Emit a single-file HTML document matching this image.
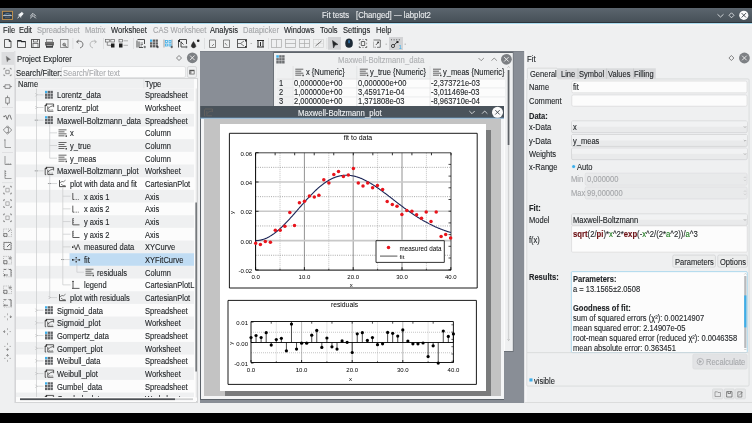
<!DOCTYPE html>
<html><head><meta charset="utf-8">
<style>
*{margin:0;padding:0;box-sizing:border-box}
html,body{width:752px;height:423px;overflow:hidden;background:#000}
body{position:relative;font-family:"Liberation Sans",sans-serif;font-size:7.8px;color:#232629}
#wrap{position:absolute;left:0;top:0;width:752px;height:423px;will-change:transform;overflow:hidden;background:#000}
.a{position:absolute}
.t{position:absolute;white-space:nowrap;line-height:1;-webkit-text-stroke:.12px currentColor;transform:scaleX(.885);transform-origin:0 0}
svg{position:absolute;overflow:visible}

#titlebar{left:0;top:8px;width:752px;height:15px;background:linear-gradient(#5b656e,#465058);border-bottom:1px solid #2e353b}
#cyan{left:0;top:23px;width:752px;height:1px;background:#a9dbef}
#menubar{left:0;top:23px;width:752px;height:13px;background:linear-gradient(#f7f8f8,#eff0f1 30%)}
#toolbar{left:0;top:36px;width:752px;height:15px;background:#eff0f1}
#main{left:0;top:51px;width:752px;height:362px;background:#eff0f1}
#mdi{left:200px;top:51px;width:324px;height:352px;background:#898e96;border-top:1px solid #7d828a}
.menu .t{top:25.90px;font-size:8.50px;color:#232629}
.menu .dis{color:#a3a5a8}




.tr .t{font-size:7.9px;color:#232629}


.ss .t{font-size:7.9px;color:#232629}


.pw .t{font-size:7.9px;color:#232629}


.fp .t{font-size:7.9px;color:#232629}
.fx b{font-weight:bold;color:#6a0c10}
.fx i{font-style:normal;color:#1f7a1f}

</style></head><body><div id="wrap">

<div id="titlebar" class="a"></div>
<div id="menubar" class="a"></div>
<div id="cyan" class="a"></div>
<div id="toolbar" class="a"></div>
<div id="main" class="a"></div>
<div id="mdi" class="a"></div>
<div class="menu">
<span class="t" style="left:3px">File</span>
<span class="t" style="left:19px">Edit</span>
<span class="t dis" style="left:37px">Spreadsheet</span>
<span class="t dis" style="left:85px">Matrix</span>
<span class="t" style="left:111px">Worksheet</span>
<span class="t dis" style="left:153px">CAS Worksheet</span>
<span class="t" style="left:210px">Analysis</span>
<span class="t dis" style="left:243px">Datapicker</span>
<span class="t" style="left:284px">Windows</span>
<span class="t" style="left:320px">Tools</span>
<span class="t" style="left:343px">Settings</span>
<span class="t" style="left:376px">Help</span>
</div>
<span class="t" style="left:322px;top:11.4px;color:#eceef0;font-size:8.75px">Fit tests</span>
<span class="t" style="left:356px;top:11.4px;color:#eceef0;font-size:8.75px">[Changed] — labplot2</span>

<svg style="left:0;top:0" width="752" height="60" viewBox="0 0 752 60"><path d="M4.5 39.5 H9 L11 41.5 V47.5 H4.5 Z" fill="none" stroke="#4d4d4d" stroke-width="0.9"/><path d="M9 39.5 L11 41.5 H9Z" fill="#232629" stroke="#232629" stroke-width="0.5"/><path d="M17.5 40.5 H21 L22 41.5 H25.5 V47.5 H17.5 Z" fill="none" stroke="#4d4d4d" stroke-width="0.9"/><rect x="17.5" y="40" width="4" height="1.6" fill="#232629"/><rect x="21" y="41" width="4.5" height="1.2" fill="#232629"/><rect x="31.5" y="39.5" width="8" height="8" fill="none" stroke="#4d4d4d" stroke-width="0.9"/><rect x="33.5" y="39.5" width="4" height="2.5" fill="none"/><rect x="33.5" y="39.5" width="4" height="2.5" fill="none" stroke="#4d4d4d" stroke-width="0.7"/><rect x="33" y="43.5" width="5" height="4" fill="none" stroke="#4d4d4d" stroke-width="0.7"/><rect x="46.5" y="39.5" width="6" height="2.5" fill="none" stroke="#777" stroke-width="0.7"/><rect x="45" y="42" width="9" height="3.5" fill="#6b6b6b"/><rect x="46.5" y="44.5" width="6" height="2.5" fill="none" stroke="#4d4d4d" stroke-width="0.7"/><rect x="46" y="46.2" width="7" height="1.3" fill="#232629"/><rect x="60.5" y="39.5" width="7.5" height="8" fill="none" stroke="#8a8a8a" stroke-width="0.9"/><path d="M63.5 44 L67 47.5" fill="none" stroke="#4d4d4d" stroke-width="1"/><circle cx="64.2" cy="44.6" r="1.4" fill="none" stroke="#555" stroke-width=".8"/><rect x="72.5" y="38" width="0.8" height="11" fill="#dadbdc"/><path d="M77 41.5 Q82 40 83 44 Q83.5 47 80 48" fill="none" stroke="#6b6b6b" stroke-width="0.9"/><path d="M76.5 41.8 L78.8 40 M76.5 41.8 L78.5 43.3" fill="none" stroke="#6b6b6b" stroke-width="0.9"/><path d="M96 41.5 Q91 40 90 44 Q89.5 47 93 48" fill="none" stroke="#b4b5b6" stroke-width="0.9"/><path d="M96.5 41.8 L94.2 40 M96.5 41.8 L94.5 43.3" fill="none" stroke="#b4b5b6" stroke-width="0.9"/><rect x="103" y="38" width="0.8" height="11" fill="#dadbdc"/><rect x="105.5" y="39.5" width="3.8" height="2.5" fill="none" stroke="#666" stroke-width="0.7"/><rect x="110.8" y="39.5" width="3.8" height="2.5" fill="none" stroke="#666" stroke-width="0.7"/><path d="M107.3 42 V45.3 H111" fill="none" stroke="#666" stroke-width="0.7"/><rect x="111" y="43.5" width="3.5" height="4" fill="#1e1e1e"/><rect x="119" y="39.5" width="3.5" height="2.5" fill="none" stroke="#666" stroke-width="0.7"/><rect x="123.5" y="40.3" width="4.5" height="1" fill="#b0b0b0"/><rect x="119" y="43.5" width="3.5" height="4" fill="#1e1e1e"/><rect x="123.5" y="44.8" width="4.5" height="1" fill="#b0b0b0"/><rect x="133" y="38" width="0.8" height="11" fill="#dadbdc"/><path d="M137 40.5 V47.5 M137.5 39.5 H144.5 V44 M139 41.5 V47.5 H143" fill="none" stroke="#3a3a3a" stroke-width="0.9"/><path d="M140.5 43 H143 M140.5 44.5 H143 M140.5 46 H142" fill="none" stroke="#3a3a3a" stroke-width="0.6"/><path d="M143.5 47 H146 M144.8 45.8 V48.2" fill="none" stroke="#232629" stroke-width="0.6"/><rect x="150.0" y="39.5" width="2.3" height="2.3" fill="#3daee9"/><rect x="150.0" y="42.3" width="2.3" height="2.3" fill="#5e5e5e"/><rect x="150.0" y="45.1" width="2.3" height="2.3" fill="#5e5e5e"/><rect x="152.8" y="39.5" width="2.3" height="2.3" fill="#5e5e5e"/><rect x="152.8" y="42.3" width="2.3" height="2.3" fill="#5e5e5e"/><rect x="152.8" y="45.1" width="2.3" height="2.3" fill="#5e5e5e"/><rect x="155.6" y="39.5" width="2.3" height="2.3" fill="#5e5e5e"/><rect x="155.6" y="42.3" width="2.3" height="2.3" fill="#5e5e5e"/><rect x="155.6" y="45.1" width="2.3" height="2.3" fill="#5e5e5e"/><path d="M156.5 47 H159 M157.7 45.8 V48.2" fill="none" stroke="#232629" stroke-width="0.6"/><path d="M164 39.5 V47.5 M172 39.5 V47.5" fill="none" stroke="#707070" stroke-width="0.6"/><rect x="165.5" y="40.5" width="2" height="2" fill="none" stroke="#3daee9" stroke-width="0.8"/><rect x="165.5" y="44.0" width="2" height="2" fill="none" stroke="#3daee9" stroke-width="0.8"/><rect x="169.0" y="40.5" width="2" height="2" fill="none" stroke="#3daee9" stroke-width="0.8"/><rect x="169.0" y="44.0" width="2" height="2" fill="none" stroke="#3daee9" stroke-width="0.8"/><path d="M170.5 47 H173 M171.7 45.8 V48.2" fill="none" stroke="#232629" stroke-width="0.6"/><path d="M178.5 41 V47.5 M179 39.5 H186.5 V44 M181 42 L183.5 44.5 M181 41.5 V47 H185" fill="none" stroke="#3a3a3a" stroke-width="0.9"/><rect x="178" y="40" width="2" height="2" fill="#232629"/><path d="M185 47 H187.5 M186.2 45.8 V48.2" fill="none" stroke="#232629" stroke-width="0.6"/><path d="M193.5 41.5 Q191 45 191.2 46.3 A2.6 2.6 0 0 0 196 46.3 Q196 45 193.5 41.5Z" fill="#2b2b2b" stroke="#2b2b2b" stroke-width="0.4"/><circle cx="198.2" cy="40.8" r="1.3" fill="#1e1e1e"/><rect x="204" y="38" width="0.8" height="11" fill="#dadbdc"/><path d="M209.5 40 H215.5 V47.5 H209.5 Z" fill="none" stroke="#6a6a6a" stroke-width="0.8"/><path d="M212 46 L214 44" fill="none" stroke="#555" stroke-width="0.7"/><path d="M223.5 40 H229.5 V47.5 H223.5 Z" fill="none" stroke="#6a6a6a" stroke-width="0.8"/><path d="M225 43 L227 45.5" fill="none" stroke="#555" stroke-width="0.7"/><rect x="237.5" y="39.5" width="9" height="8" fill="none" stroke="#4a4a4a" stroke-width="0.9"/><path d="M238 43.5 H240.5 L244 41 M240.5 43.5 L244 46" fill="none" stroke="#4a4a4a" stroke-width="0.7"/><rect x="245" y="40" width="1.5" height="1.5" fill="#333"/><rect x="245" y="46" width="1.5" height="1.5" fill="#333"/><rect x="250.5" y="43.3" width="1.5" height="0.6" fill="#8a8a8a"/><path d="M257 40.5 H264 M257 47 H264 M258 40.5 V47 M263 40.5 V47 M260.5 42 V46" fill="none" stroke="#2a2a2a" stroke-width="1"/><rect x="268" y="38" width="0.8" height="11" fill="#dadbdc"/><rect x="271.5" y="39.5" width="10" height="8" fill="none" stroke="#a9a9a9" stroke-width="0.7"/><path d="M276.5 39.5 V47.5" fill="none" stroke="#a9a9a9" stroke-width="0.7"/><rect x="285.5" y="39.5" width="10" height="8" fill="none" stroke="#a9a9a9" stroke-width="0.7"/><path d="M285.5 43.5 H295.5" fill="none" stroke="#a9a9a9" stroke-width="0.7"/><rect x="299.5" y="39.5" width="10" height="8" fill="none" stroke="#a9a9a9" stroke-width="0.7"/><path d="M304.5 39.5 V47.5 M299.5 43.5 H309.5" fill="none" stroke="#a9a9a9" stroke-width="0.7"/><rect x="313.5" y="39.5" width="10" height="8" fill="none" stroke="#cfcfcf" stroke-width="0.7"/><path d="M318.5 39.5 V47.5 M313.5 43.5 H323.5" fill="none" stroke="#dadada" stroke-width="0.6"/><path d="M315.5 46 L321.5 41" fill="none" stroke="#555" stroke-width="0.8"/><rect x="326.5" y="38" width="0.8" height="11" fill="#dadbdc"/><rect x="328" y="37" width="13" height="12.7" fill="#d2d3d5"/><path d="M332.5 40.5 L338 44.5 L335 45 L333.5 48 Z" fill="#232629" stroke="#232629" stroke-width="0.5"/><path d="M349 38.6 C352.3 38.6 352.8 41.5 352.8 43.5 C352.8 46.5 351.5 47.8 349 47.8 C346.5 47.8 345.3 46.5 345.3 43.5 C345.3 41.5 345.8 38.6 349 38.6Z" fill="#1c2935"/><rect x="348.4" y="40.2" width="1.3" height="3" fill="#2f82c8"/><path d="M359.3 40.8 V39.5 H360.8 M365.2 39.5 H366.7 V40.8 M366.7 46.2 V47.5 H365.2 M360.8 47.5 H359.3 V46.2" fill="none" stroke="#444" stroke-width="0.8"/><path d="M361.3 41.5 H364.7 V45.5 H361.3Z" fill="none" stroke="#444" stroke-width="0.8"/><path d="M362.2 39.6 H363.8 M362.2 47.4 H363.8 M359.4 42.7 V44.3 M366.6 42.7 V44.3" fill="none" stroke="#666" stroke-width="0.6"/><path d="M373.5 40 H380.3 V47.3 H377" fill="none" stroke="#555" stroke-width="0.8"/><path d="M373.5 41.5 V47.3 H376" fill="none" stroke="#666" stroke-width="0.7"/><path d="M373.5 41.5 V47.3 H376" fill="none" stroke="#eff0f1" stroke-width=".9" stroke-dasharray="1 1"/><path d="M375.8 45 L378.4 42.4" fill="none" stroke="#333" stroke-width="0.8"/><rect x="377.3" y="41.6" width="1.6" height="1.6" fill="#333"/><rect x="385.5" y="43.8" width="1.5" height="0.6" fill="#8a8a8a"/><rect x="389" y="37" width="14" height="13" fill="#d2d3d5"/><path d="M391 39.8 H401" stroke="#333" stroke-width=".8" stroke-dasharray="1 1.6"/><circle cx="393" cy="46" r="1.6" fill="none" stroke="#333" stroke-width=".9"/><path d="M394 45 L397.5 41.8" fill="none" stroke="#333" stroke-width="0.9"/><rect x="396.5" y="41" width="2" height="2" fill="#222"/><text x="398.5" y="48.5" font-size="6" fill="#3daee9" font-family="Liberation Sans">1</text><rect x="404.5" y="43.8" width="1.5" height="0.6" fill="#8a8a8a"/></svg>
<svg style="left:0;top:0" width="752" height="24" viewBox="0 0 752 24">
<rect x="2.4" y="11.3" width="10.1" height="8.1" fill="#2e3d4c" stroke="#c9954c" stroke-width=".9"/>
<path d="M3.5 15.5 Q7.5 11.8 11.5 15.5" stroke="#7fa8c8" stroke-width=".7" fill="none"/>
<path d="M3.2 15.6 H11.7" stroke="#dfe9f0" stroke-width=".8"/>
<path d="M5 17.5 H10" stroke="#6b7f90" stroke-width=".5"/>
<path d="M17.6 18 L19.4 16.3" stroke="#f4f6f8" stroke-width="1"/>
<path d="M19 14.6 L21.8 12.4 L23.2 13.6 L20.8 16.6 Z" fill="#f4f6f8" stroke="#f4f6f8" stroke-width=".9"/>
<path d="M18.3 14.9 L21.2 17.6" stroke="#f4f6f8" stroke-width=".9"/>
<path d="M30.2 16.2 L33 13.4 L35.8 16.2 M30.2 18.3 L33 15.5 L35.8 18.3" stroke="#f0f2f4" stroke-width=".85" fill="none"/>
<path d="M717.5 14.3 L720.5 17 L723.5 14.3" stroke="#eef0f2" stroke-width=".8" fill="none"/>
<path d="M731.5 12.8 L734 15.3 L731.5 17.8 L729 15.3Z" stroke="#eef0f2" stroke-width=".8" fill="none"/>
<circle cx="743.8" cy="15.3" r="4.6" fill="#fbfbfb"/>
<path d="M741.6 13.1 L746 17.5 M746 13.1 L741.6 17.5" stroke="#3a4148" stroke-width=".9"/>
</svg>
<div class="a" style="left:15px;top:78px;width:183px;height:324px;background:#fcfcfc;border:1px solid #d4d5d6"></div><div class="a" style="left:61px;top:66px;width:125px;height:12px;background:#fcfcfc;border:1px solid #e2e3e4;border-radius:2px"></div><div class="a" style="left:186.5px;top:66px;width:10.5px;height:12px;background:#eff0f1;border:1px solid #d8d9da;border-radius:2px"></div><svg style="left:0;top:0" width="200" height="410" viewBox="0 0 200 410"><rect x="14.4" y="51" width="0.9" height="352" fill="#d6d7d9"/><rect x="1.5" y="52" width="12.5" height="12.9" fill="#dcdddf"/><path d="M6.2 56.2 L10.6 59.4 L8.4 59.9 L7.1 62.1 Z" fill="#6a6a6a" stroke="#6a6a6a" stroke-width="0.3" /><path d="M5.2 68.4 H3.9 V69.7 M5.2 75.6 H3.9 V74.3 M9.799999999999999 68.4 H11.1 V69.7 M9.799999999999999 75.6 H11.1 V74.3 " fill="none" stroke="#707070" stroke-width="0.7" /><path d="M5.8 70.3 H9.2 V73.7 H5.8Z" fill="none" stroke="#777" stroke-width="0.7" /><path d="M5 84.8 H10 V88.4 H5Z M3 86.6 H5 M10 86.6 H12" fill="none" stroke="#666" stroke-width="0.7" /><path d="M5.7 97.6 H9.3 V103.2 H5.7Z M7.5 95.6 V97.6 M7.5 103.2 V105.2" fill="none" stroke="#666" stroke-width="0.7" /><rect x="2" y="107" width="11" height="0.8" fill="#dcdddf"/><rect x="3.5" y="115.8" width="1.3" height="1.3" fill="#555"/><path d="M5.5 115 L7.2 119.5 L9 114.8 M9.8 114.8 L11.5 119.5" fill="none" stroke="#555" stroke-width="0.8" /><path d="M7.5 125.8 L11.7 130 L7.5 134.2 L3.3 130Z M6.6 127.5 L8.4 127.5 L8.4 132.5 L6.6 132.5" fill="none" stroke="#666" stroke-width="0.7" /><path d="M5 139.5 V147.5 H11 M4 140 H5.5" fill="none" stroke="#777" stroke-width="0.7" /><rect x="2" y="152" width="11" height="0.8" fill="#dcdddf"/><path d="M5 156 V164.5 H11.5" fill="none" stroke="#777" stroke-width="0.7" /><path d="M7 163.3 V164.5 M8.8 163.3 V164.5 M10.6 163.3 V164.5" fill="none" stroke="#666" stroke-width="0.6" /><path d="M5 170 V178.5 H11.5" fill="none" stroke="#777" stroke-width="0.7" /><path d="M5 171.5 H6.2 M5 173.5 H6.2 M5 175.5 H6.2" fill="none" stroke="#666" stroke-width="0.6" /><rect x="2" y="182.3" width="11" height="0.8" fill="#dcdddf"/><path d="M5.0 186.29999999999998 H3.7 V187.6 M5.0 193.9 H3.7 V192.6 M10.0 186.29999999999998 H11.3 V187.6 M10.0 193.9 H11.3 V192.6 " fill="none" stroke="#666" stroke-width="0.7" /><path d="M5.8 188.29999999999998 H9.2 V191.9 H5.8Z" fill="none" stroke="#888" stroke-width="0.6" /><path d="M5.0 199.79999999999998 H3.7 V201.1 M5.0 207.4 H3.7 V206.1 M10.0 199.79999999999998 H11.3 V201.1 M10.0 207.4 H11.3 V206.1 " fill="none" stroke="#666" stroke-width="0.7" /><path d="M5.8 201.79999999999998 H9.2 V205.4 H5.8Z" fill="none" stroke="#888" stroke-width="0.6" /><path d="M5.0 214.0 H3.7 V215.3 M5.0 221.60000000000002 H3.7 V220.3 M10.0 214.0 H11.3 V215.3 M10.0 221.60000000000002 H11.3 V220.3 " fill="none" stroke="#666" stroke-width="0.7" /><path d="M5.8 216.0 H9.2 V219.60000000000002 H5.8Z" fill="none" stroke="#888" stroke-width="0.6" /><rect x="3.5" y="229.0" width="8" height="7.6" fill="none" stroke="#8a8a8a" stroke-width=".6" stroke-dasharray="1 1.2"/><rect x="3.5" y="233.3" width="3.5" height="3.3" fill="none"/><path d="M3.8 233.60000000000002 H7 V236.4 H3.8Z" fill="none" stroke="#555" stroke-width="0.7" /><path d="M8 231.8 L10.5 229.8" fill="none" stroke="#555" stroke-width="0.6" /><rect x="3.5" y="242.2" width="8" height="7.6" fill="none" stroke="#8a8a8a" stroke-width=".6" stroke-dasharray="1 1.2"/><path d="M4 242.5 H11 V249.5 H4Z" fill="none" stroke="#666" stroke-width="0.7" /><path d="M7 247 L10 244" fill="none" stroke="#444" stroke-width="0.8" /><rect x="3.5" y="256.4" width="8" height="7.6" fill="none" stroke="#8a8a8a" stroke-width=".6" stroke-dasharray="1 1.2"/><path d="M3.8 260.7 H7 V263.7 H3.8Z" fill="none" stroke="#555" stroke-width="0.7" /><path d="M10 256.7 V259.7 M8.5 258.2 H11.5" fill="none" stroke="#555" stroke-width="0.6" /><rect x="3.5" y="269.2" width="8" height="7.6" fill="none" stroke="#8a8a8a" stroke-width=".6" stroke-dasharray="1 1.2"/><path d="M4 269.5 H6 M9 269.5 H11 V276.5 M4 275 H8 M5 274 L4 275 L5 276" fill="none" stroke="#555" stroke-width="0.7" /><rect x="3.5" y="286.0" width="8" height="7.6" fill="none" stroke="#8a8a8a" stroke-width=".6" stroke-dasharray="1 1.2"/><path d="M3.8 290.3 H7 V293.3 H3.8Z" fill="none" stroke="#555" stroke-width="0.7" /><path d="M10 286.3 V289.3 M8.5 287.8 H11.5" fill="none" stroke="#555" stroke-width="0.6" /><rect x="3.5" y="299.5" width="8" height="7.6" fill="none" stroke="#8a8a8a" stroke-width=".6" stroke-dasharray="1 1.2"/><path d="M4 299.8 H6 M9 299.8 H11 V306.8 M4 305.3 H8 M5 304.3 L4 305.3 L5 306.3" fill="none" stroke="#555" stroke-width="0.7" /><path d="M7.5 313.3 V315.3 M7.5 318.3 V320.3 M4 316.8 H5.5 M9.5 316.8 H11" fill="none" stroke="#8a8a8a" stroke-width="0.6" /><path d="M10 315.8 L11.5 316.8 L10 317.8" fill="none" stroke="#555" stroke-width="0.7" /><path d="M7.5 328.1 V330.1 M7.5 333.1 V335.1 M4 331.6 H5.5 M9.5 331.6 H11" fill="none" stroke="#8a8a8a" stroke-width="0.6" /><path d="M5 330.6 L3.5 331.6 L5 332.6" fill="none" stroke="#555" stroke-width="0.7" /><path d="M7.5 342.9 V344.9 M7.5 347.9 V349.9 M4 346.4 H5.5 M9.5 346.4 H11" fill="none" stroke="#8a8a8a" stroke-width="0.6" /><path d="M6.5 348.9 L7.5 350.4 L8.5 348.9" fill="none" stroke="#555" stroke-width="0.7" /><path d="M7.5 354.9 V356.9 M7.5 359.9 V361.9 M4 358.4 H5.5 M9.5 358.4 H11" fill="none" stroke="#8a8a8a" stroke-width="0.6" /><path d="M6.5 355.9 L7.5 354.4 L8.5 355.9" fill="none" stroke="#555" stroke-width="0.7" /><path d="M179 55.5 L181.5 58 L179 60.5 L176.5 58Z" fill="none" stroke="#555" stroke-width="0.7" /><circle cx="192.3" cy="57.8" r="5.4" fill="#7d8084"/><path d="M190 55.5 L194.6 60.1 M194.6 55.5 L190 60.1" fill="none" stroke="#f2f2f2" stroke-width="0.9" /><rect x="189.3" y="69.8" width="5.2" height="4.6" fill="#555"/><rect x="190.2" y="71.2" width="3.6" height="2.5" fill="#f4f4f4"/><rect x="190.2" y="71.2" width="1.2" height="2.5" fill="#777"/><rect x="16" y="79" width="178" height="9.5" fill="#eff0f1"/><rect x="143.5" y="79" width="0.8" height="9.5" fill="#dcdddf"/><rect x="16" y="88.5" width="178" height="12.67" fill="#eff0f1"/><path d="M36.5 94.835 H43.5" fill="none" stroke="#c9cacb" stroke-width="0.7" /><path d="M35.5 93.335 L37.0 94.835 L35.5 96.335" fill="none" stroke="#9a9b9c" stroke-width="0.6" /><rect x="45.0" y="90.835" width="2.35" height="2.35" fill="#3daee9"/><rect x="45.0" y="93.585" width="2.35" height="2.35" fill="#616366"/><rect x="45.0" y="96.335" width="2.35" height="2.35" fill="#616366"/><rect x="47.75" y="90.835" width="2.35" height="2.35" fill="#616366"/><rect x="47.75" y="93.585" width="2.35" height="2.35" fill="#616366"/><rect x="47.75" y="96.335" width="2.35" height="2.35" fill="#616366"/><rect x="50.5" y="90.835" width="2.35" height="2.35" fill="#616366"/><rect x="50.5" y="93.585" width="2.35" height="2.35" fill="#616366"/><rect x="50.5" y="96.335" width="2.35" height="2.35" fill="#616366"/><path d="M36.5 107.505 H43.5" fill="none" stroke="#c9cacb" stroke-width="0.7" /><path d="M35.5 106.005 L37.0 107.505 L35.5 109.005" fill="none" stroke="#9a9b9c" stroke-width="0.6" /><path d="M45.2 105.30499999999999 V111.30499999999999 H46.2 M45.8 104.005 H53.6 V107.10499999999999" fill="none" stroke="#333" stroke-width="0.8" /><path d="M44.8 105.705 L46.8 103.60499999999999 V105.705 Z" fill="#222" stroke="#222" stroke-width="0.3" /><path d="M47.8 106.30499999999999 V111.205 H53.4" fill="none" stroke="#333" stroke-width="0.8" /><path d="M48 108.505 L50.3 106.705 L53.2 105.705" fill="none" stroke="#333" stroke-width="0.7" /><path d="M49.3 109.80499999999999 H50.3 M51.6 109.80499999999999 H52.6" fill="none" stroke="#555" stroke-width="0.8" /><rect x="16" y="113.84" width="178" height="12.67" fill="#eff0f1"/><path d="M36.5 120.175 H43.5" fill="none" stroke="#c9cacb" stroke-width="0.7" /><path d="M34.7 120.175 H37.7" fill="none" stroke="#7a7b7c" stroke-width="0.7" /><rect x="45.0" y="116.175" width="2.35" height="2.35" fill="#3daee9"/><rect x="45.0" y="118.925" width="2.35" height="2.35" fill="#616366"/><rect x="45.0" y="121.675" width="2.35" height="2.35" fill="#616366"/><rect x="47.75" y="116.175" width="2.35" height="2.35" fill="#616366"/><rect x="47.75" y="118.925" width="2.35" height="2.35" fill="#616366"/><rect x="47.75" y="121.675" width="2.35" height="2.35" fill="#616366"/><rect x="50.5" y="116.175" width="2.35" height="2.35" fill="#616366"/><rect x="50.5" y="118.925" width="2.35" height="2.35" fill="#616366"/><rect x="50.5" y="121.675" width="2.35" height="2.35" fill="#616366"/><path d="M49.7 132.845 H57.0" fill="none" stroke="#c9cacb" stroke-width="0.7" /><path d="M58.5 129.845 H66.5 M58.5 131.845 H64.5 M58.5 133.845 H66.5 M58.5 135.845 H64.5" fill="none" stroke="#555" stroke-width="0.9" /><rect x="65.5" y="135.345" width="1.5" height="1.5" fill="#444"/><rect x="16" y="139.18" width="178" height="12.67" fill="#eff0f1"/><path d="M49.7 145.51500000000001 H57.0" fill="none" stroke="#c9cacb" stroke-width="0.7" /><path d="M58.5 142.51500000000001 H66.5 M58.5 144.51500000000001 H64.5 M58.5 146.51500000000001 H66.5 M58.5 148.51500000000001 H64.5" fill="none" stroke="#555" stroke-width="0.9" /><rect x="65.5" y="148.01500000000001" width="1.5" height="1.5" fill="#444"/><path d="M49.7 158.185 H57.0" fill="none" stroke="#c9cacb" stroke-width="0.7" /><path d="M58.5 155.185 H66.5 M58.5 157.185 H64.5 M58.5 159.185 H66.5 M58.5 161.185 H64.5" fill="none" stroke="#555" stroke-width="0.9" /><rect x="65.5" y="160.685" width="1.5" height="1.5" fill="#444"/><rect x="16" y="164.51999999999998" width="178" height="12.67" fill="#eff0f1"/><path d="M36.5 170.855 H43.5" fill="none" stroke="#c9cacb" stroke-width="0.7" /><path d="M34.7 170.855 H37.7" fill="none" stroke="#7a7b7c" stroke-width="0.7" /><path d="M45.2 168.655 V174.655 H46.2 M45.8 167.355 H53.6 V170.45499999999998" fill="none" stroke="#333" stroke-width="0.8" /><path d="M44.8 169.05499999999998 L46.8 166.95499999999998 V169.05499999999998 Z" fill="#222" stroke="#222" stroke-width="0.3" /><path d="M47.8 169.655 V174.55499999999998 H53.4" fill="none" stroke="#333" stroke-width="0.8" /><path d="M48 171.855 L50.3 170.05499999999998 L53.2 169.05499999999998" fill="none" stroke="#333" stroke-width="0.7" /><path d="M49.3 173.155 H50.3 M51.6 173.155 H52.6" fill="none" stroke="#555" stroke-width="0.8" /><path d="M49.7 183.525 H57.0" fill="none" stroke="#c9cacb" stroke-width="0.7" /><path d="M47.900000000000006 183.525 H50.900000000000006" fill="none" stroke="#7a7b7c" stroke-width="0.7" /><path d="M59.5 180.125 V186.625 H65.9" fill="none" stroke="#333" stroke-width="0.9" /><path d="M60.0 182.725 L62.0 181.425 L63.5 181.725 L65.5 180.225" fill="none" stroke="#555" stroke-width="0.7" /><path d="M61.0 184.125 L63.0 185.525 H65.5" fill="none" stroke="#555" stroke-width="0.7" /><rect x="16" y="189.86" width="178" height="12.67" fill="#eff0f1"/><path d="M62.8 196.19500000000002 H70.5" fill="none" stroke="#c9cacb" stroke-width="0.7" /><path d="M72.8 192.99500000000003 V199.49500000000003 H74" fill="none" stroke="#333" stroke-width="0.8" /><path d="M74.5 199.49500000000003 H79.6" fill="none" stroke="#555" stroke-width="0.8" stroke-dasharray=".9 .8"/><path d="M62.8 208.865 H70.5" fill="none" stroke="#c9cacb" stroke-width="0.7" /><path d="M72.8 205.66500000000002 V212.16500000000002 H74" fill="none" stroke="#333" stroke-width="0.8" /><path d="M74.5 212.16500000000002 H79.6" fill="none" stroke="#555" stroke-width="0.8" stroke-dasharray=".9 .8"/><rect x="16" y="215.2" width="178" height="12.67" fill="#eff0f1"/><path d="M62.8 221.535 H70.5" fill="none" stroke="#c9cacb" stroke-width="0.7" /><path d="M72.8 218.335 V224.835 H79.5" fill="none" stroke="#333" stroke-width="0.8" /><path d="M72.8 218.535 H74 M72.8 220.535 H74 M72.8 222.535 H74" fill="none" stroke="#444" stroke-width="0.6" /><path d="M62.8 234.205 H70.5" fill="none" stroke="#c9cacb" stroke-width="0.7" /><path d="M72.8 231.00500000000002 V237.50500000000002 H79.5" fill="none" stroke="#333" stroke-width="0.8" /><path d="M72.8 231.205 H74 M72.8 233.205 H74 M72.8 235.205 H74" fill="none" stroke="#444" stroke-width="0.6" /><rect x="16" y="240.54" width="178" height="12.67" fill="#eff0f1"/><path d="M62.8 246.875 H70.5" fill="none" stroke="#c9cacb" stroke-width="0.7" /><rect x="72" y="246.375" width="1.5" height="1.5" fill="#222"/><path d="M74 244.875 L76 249.875 L78 244.375 L80 249.875" fill="none" stroke="#3a3a3a" stroke-width="0.8" /><rect x="69.5" y="253.21" width="124.5" height="12.67" fill="#c0dcf3"/><path d="M62.8 259.545 H70.5" fill="none" stroke="#c9cacb" stroke-width="0.7" /><path d="M61.0 259.545 H64.0" fill="none" stroke="#7a7b7c" stroke-width="0.7" /><rect x="72" y="259.045" width="1.6" height="1.6" fill="#222"/><rect x="75.5" y="257.045" width="1.4" height="1.4" fill="#333"/><rect x="75.5" y="261.045" width="1.4" height="1.4" fill="#333"/><rect x="78.5" y="259.045" width="1.6" height="1.6" fill="#333"/><path d="M73.5 259.845 H80" fill="none" stroke="#555" stroke-width="0.6" /><rect x="16" y="265.88" width="178" height="12.67" fill="#eff0f1"/><path d="M76.9 272.215 H84.0" fill="none" stroke="#c9cacb" stroke-width="0.7" /><path d="M85.5 269.215 H93.5 M85.5 271.215 H91.5 M85.5 273.215 H93.5 M85.5 275.215 H91.5" fill="none" stroke="#555" stroke-width="0.9" /><rect x="92.5" y="274.715" width="1.5" height="1.5" fill="#444"/><path d="M62.8 284.885 H70.5" fill="none" stroke="#c9cacb" stroke-width="0.7" /><path d="M73 281.385 V288.385 H79.5 M72 281.385 H74 M72 288.385 H73" fill="none" stroke="#333" stroke-width="0.8" /><rect x="16" y="291.22" width="178" height="12.67" fill="#eff0f1"/><path d="M49.7 297.555 H57.0" fill="none" stroke="#c9cacb" stroke-width="0.7" /><path d="M48.7 296.055 L50.2 297.555 L48.7 299.055" fill="none" stroke="#9a9b9c" stroke-width="0.6" /><path d="M59.5 294.15500000000003 V300.65500000000003 H65.9" fill="none" stroke="#333" stroke-width="0.9" /><path d="M60.0 296.755 L62.0 295.455 L63.5 295.755 L65.5 294.255" fill="none" stroke="#555" stroke-width="0.7" /><path d="M61.0 298.15500000000003 L63.0 299.555 H65.5" fill="none" stroke="#555" stroke-width="0.7" /><path d="M36.5 310.22499999999997 H43.5" fill="none" stroke="#c9cacb" stroke-width="0.7" /><path d="M35.5 308.72499999999997 L37.0 310.22499999999997 L35.5 311.72499999999997" fill="none" stroke="#9a9b9c" stroke-width="0.6" /><rect x="45.0" y="306.22499999999997" width="2.35" height="2.35" fill="#3daee9"/><rect x="45.0" y="308.97499999999997" width="2.35" height="2.35" fill="#616366"/><rect x="45.0" y="311.72499999999997" width="2.35" height="2.35" fill="#616366"/><rect x="47.75" y="306.22499999999997" width="2.35" height="2.35" fill="#616366"/><rect x="47.75" y="308.97499999999997" width="2.35" height="2.35" fill="#616366"/><rect x="47.75" y="311.72499999999997" width="2.35" height="2.35" fill="#616366"/><rect x="50.5" y="306.22499999999997" width="2.35" height="2.35" fill="#616366"/><rect x="50.5" y="308.97499999999997" width="2.35" height="2.35" fill="#616366"/><rect x="50.5" y="311.72499999999997" width="2.35" height="2.35" fill="#616366"/><rect x="16" y="316.56" width="178" height="12.67" fill="#eff0f1"/><path d="M36.5 322.895 H43.5" fill="none" stroke="#c9cacb" stroke-width="0.7" /><path d="M35.5 321.395 L37.0 322.895 L35.5 324.395" fill="none" stroke="#9a9b9c" stroke-width="0.6" /><path d="M45.2 320.695 V326.695 H46.2 M45.8 319.395 H53.6 V322.495" fill="none" stroke="#333" stroke-width="0.8" /><path d="M44.8 321.09499999999997 L46.8 318.995 V321.09499999999997 Z" fill="#222" stroke="#222" stroke-width="0.3" /><path d="M47.8 321.695 V326.59499999999997 H53.4" fill="none" stroke="#333" stroke-width="0.8" /><path d="M48 323.895 L50.3 322.09499999999997 L53.2 321.09499999999997" fill="none" stroke="#333" stroke-width="0.7" /><path d="M49.3 325.195 H50.3 M51.6 325.195 H52.6" fill="none" stroke="#555" stroke-width="0.8" /><path d="M36.5 335.565 H43.5" fill="none" stroke="#c9cacb" stroke-width="0.7" /><path d="M35.5 334.065 L37.0 335.565 L35.5 337.065" fill="none" stroke="#9a9b9c" stroke-width="0.6" /><rect x="45.0" y="331.565" width="2.35" height="2.35" fill="#3daee9"/><rect x="45.0" y="334.315" width="2.35" height="2.35" fill="#616366"/><rect x="45.0" y="337.065" width="2.35" height="2.35" fill="#616366"/><rect x="47.75" y="331.565" width="2.35" height="2.35" fill="#616366"/><rect x="47.75" y="334.315" width="2.35" height="2.35" fill="#616366"/><rect x="47.75" y="337.065" width="2.35" height="2.35" fill="#616366"/><rect x="50.5" y="331.565" width="2.35" height="2.35" fill="#616366"/><rect x="50.5" y="334.315" width="2.35" height="2.35" fill="#616366"/><rect x="50.5" y="337.065" width="2.35" height="2.35" fill="#616366"/><rect x="16" y="341.9" width="178" height="12.67" fill="#eff0f1"/><path d="M36.5 348.23499999999996 H43.5" fill="none" stroke="#c9cacb" stroke-width="0.7" /><path d="M35.5 346.73499999999996 L37.0 348.23499999999996 L35.5 349.73499999999996" fill="none" stroke="#9a9b9c" stroke-width="0.6" /><path d="M45.2 346.03499999999997 V352.03499999999997 H46.2 M45.8 344.73499999999996 H53.6 V347.835" fill="none" stroke="#333" stroke-width="0.8" /><path d="M44.8 346.43499999999995 L46.8 344.335 V346.43499999999995 Z" fill="#222" stroke="#222" stroke-width="0.3" /><path d="M47.8 347.03499999999997 V351.93499999999995 H53.4" fill="none" stroke="#333" stroke-width="0.8" /><path d="M48 349.23499999999996 L50.3 347.43499999999995 L53.2 346.43499999999995" fill="none" stroke="#333" stroke-width="0.7" /><path d="M49.3 350.53499999999997 H50.3 M51.6 350.53499999999997 H52.6" fill="none" stroke="#555" stroke-width="0.8" /><path d="M36.5 360.905 H43.5" fill="none" stroke="#c9cacb" stroke-width="0.7" /><path d="M35.5 359.405 L37.0 360.905 L35.5 362.405" fill="none" stroke="#9a9b9c" stroke-width="0.6" /><rect x="45.0" y="356.905" width="2.35" height="2.35" fill="#3daee9"/><rect x="45.0" y="359.655" width="2.35" height="2.35" fill="#616366"/><rect x="45.0" y="362.405" width="2.35" height="2.35" fill="#616366"/><rect x="47.75" y="356.905" width="2.35" height="2.35" fill="#616366"/><rect x="47.75" y="359.655" width="2.35" height="2.35" fill="#616366"/><rect x="47.75" y="362.405" width="2.35" height="2.35" fill="#616366"/><rect x="50.5" y="356.905" width="2.35" height="2.35" fill="#616366"/><rect x="50.5" y="359.655" width="2.35" height="2.35" fill="#616366"/><rect x="50.5" y="362.405" width="2.35" height="2.35" fill="#616366"/><rect x="16" y="367.24" width="178" height="12.67" fill="#eff0f1"/><path d="M36.5 373.575 H43.5" fill="none" stroke="#c9cacb" stroke-width="0.7" /><path d="M35.5 372.075 L37.0 373.575 L35.5 375.075" fill="none" stroke="#9a9b9c" stroke-width="0.6" /><path d="M45.2 371.375 V377.375 H46.2 M45.8 370.075 H53.6 V373.175" fill="none" stroke="#333" stroke-width="0.8" /><path d="M44.8 371.775 L46.8 369.675 V371.775 Z" fill="#222" stroke="#222" stroke-width="0.3" /><path d="M47.8 372.375 V377.275 H53.4" fill="none" stroke="#333" stroke-width="0.8" /><path d="M48 374.575 L50.3 372.775 L53.2 371.775" fill="none" stroke="#333" stroke-width="0.7" /><path d="M49.3 375.875 H50.3 M51.6 375.875 H52.6" fill="none" stroke="#555" stroke-width="0.8" /><path d="M36.5 386.245 H43.5" fill="none" stroke="#c9cacb" stroke-width="0.7" /><path d="M35.5 384.745 L37.0 386.245 L35.5 387.745" fill="none" stroke="#9a9b9c" stroke-width="0.6" /><rect x="45.0" y="382.245" width="2.35" height="2.35" fill="#3daee9"/><rect x="45.0" y="384.995" width="2.35" height="2.35" fill="#616366"/><rect x="45.0" y="387.745" width="2.35" height="2.35" fill="#616366"/><rect x="47.75" y="382.245" width="2.35" height="2.35" fill="#616366"/><rect x="47.75" y="384.995" width="2.35" height="2.35" fill="#616366"/><rect x="47.75" y="387.745" width="2.35" height="2.35" fill="#616366"/><rect x="50.5" y="382.245" width="2.35" height="2.35" fill="#616366"/><rect x="50.5" y="384.995" width="2.35" height="2.35" fill="#616366"/><rect x="50.5" y="387.745" width="2.35" height="2.35" fill="#616366"/><rect x="16" y="392.58" width="178" height="5.420000000000016" fill="#eff0f1"/><path d="M36.5 398.91499999999996 H43.5" fill="none" stroke="#c9cacb" stroke-width="0.7" /><path d="M35.5 397.41499999999996 L37.0 398.91499999999996 L35.5 400.41499999999996" fill="none" stroke="#9a9b9c" stroke-width="0.6" /><path d="M45.2 396.715 V402.715 H46.2 M45.8 395.41499999999996 H53.6 V398.515" fill="none" stroke="#333" stroke-width="0.8" /><path d="M44.8 397.11499999999995 L46.8 395.015 V397.11499999999995 Z" fill="#222" stroke="#222" stroke-width="0.3" /><path d="M47.8 397.715 V402.61499999999995 H53.4" fill="none" stroke="#333" stroke-width="0.8" /><path d="M48 399.91499999999996 L50.3 398.11499999999995 L53.2 397.11499999999995" fill="none" stroke="#333" stroke-width="0.7" /><path d="M49.3 401.215 H50.3 M51.6 401.215 H52.6" fill="none" stroke="#555" stroke-width="0.8" /><path d="M36.5 88.5 V398" fill="none" stroke="#c9cacb" stroke-width="0.7" /><path d="M49.7 124.175 V158.185 M49.7 174.855 V297.555" fill="none" stroke="#c9cacb" stroke-width="0.7" /><path d="M62.8 187.525 V284.885" fill="none" stroke="#c9cacb" stroke-width="0.7" /><path d="M76.9 263.545 V272.215" fill="none" stroke="#c9cacb" stroke-width="0.7" /></svg><div class="tr"><span class="t" style="left:16.5px;top:54.85px;font-size:8.72px;color:#232629;font-weight:normal">Project Explorer</span><span class="t" style="left:16px;top:68.85px;font-size:8.72px;color:#232629;font-weight:normal">Search/Filter:</span><span class="t" style="left:63px;top:68.75px;font-size:8.50px;color:#a8aaad;font-weight:normal">Search/Filter text</span><span class="t" style="left:18px;top:80.05px;font-size:8.50px;color:#232629;font-weight:normal">Name</span><span class="t" style="left:145px;top:80.05px;font-size:8.50px;color:#232629;font-weight:normal">Type</span><span class="t" style="left:56.5px;top:91.18px;font-size:8.50px;color:#232629;font-weight:normal">Lorentz_data</span><span class="t" style="left:145px;top:91.18px;font-size:8.50px;color:#232629;font-weight:normal">Spreadsheet</span><span class="t" style="left:56.5px;top:103.85px;font-size:8.50px;color:#232629;font-weight:normal">Lorentz_plot</span><span class="t" style="left:145px;top:103.85px;font-size:8.50px;color:#232629;font-weight:normal">Worksheet</span><span class="t" style="left:56.5px;top:116.52px;font-size:8.50px;color:#232629;font-weight:normal">Maxwell-Boltzmann_data</span><span class="t" style="left:145px;top:116.52px;font-size:8.50px;color:#232629;font-weight:normal">Spreadsheet</span><span class="t" style="left:70.0px;top:129.20px;font-size:8.50px;color:#232629;font-weight:normal">x</span><span class="t" style="left:145px;top:129.20px;font-size:8.50px;color:#232629;font-weight:normal">Column</span><span class="t" style="left:70.0px;top:141.87px;font-size:8.50px;color:#232629;font-weight:normal">y_true</span><span class="t" style="left:145px;top:141.87px;font-size:8.50px;color:#232629;font-weight:normal">Column</span><span class="t" style="left:70.0px;top:154.54px;font-size:8.50px;color:#232629;font-weight:normal">y_meas</span><span class="t" style="left:145px;top:154.54px;font-size:8.50px;color:#232629;font-weight:normal">Column</span><span class="t" style="left:56.5px;top:167.21px;font-size:8.50px;color:#232629;font-weight:normal">Maxwell-Boltzmann_plot</span><span class="t" style="left:145px;top:167.21px;font-size:8.50px;color:#232629;font-weight:normal">Worksheet</span><span class="t" style="left:70.0px;top:179.88px;font-size:8.50px;color:#232629;font-weight:normal">plot with data and fit</span><span class="t" style="left:145px;top:179.88px;font-size:8.50px;color:#232629;font-weight:normal">CartesianPlot</span><span class="t" style="left:83.5px;top:192.55px;font-size:8.50px;color:#232629;font-weight:normal">x axis 1</span><span class="t" style="left:145px;top:192.55px;font-size:8.50px;color:#232629;font-weight:normal">Axis</span><span class="t" style="left:83.5px;top:205.22px;font-size:8.50px;color:#232629;font-weight:normal">x axis 2</span><span class="t" style="left:145px;top:205.22px;font-size:8.50px;color:#232629;font-weight:normal">Axis</span><span class="t" style="left:83.5px;top:217.89px;font-size:8.50px;color:#232629;font-weight:normal">y axis 1</span><span class="t" style="left:145px;top:217.89px;font-size:8.50px;color:#232629;font-weight:normal">Axis</span><span class="t" style="left:83.5px;top:230.56px;font-size:8.50px;color:#232629;font-weight:normal">y axis 2</span><span class="t" style="left:145px;top:230.56px;font-size:8.50px;color:#232629;font-weight:normal">Axis</span><span class="t" style="left:83.5px;top:243.23px;font-size:8.50px;color:#232629;font-weight:normal">measured data</span><span class="t" style="left:145px;top:243.23px;font-size:8.50px;color:#232629;font-weight:normal">XYCurve</span><span class="t" style="left:83.5px;top:255.90px;font-size:8.50px;color:#232629;font-weight:normal">fit</span><span class="t" style="left:145px;top:255.90px;font-size:8.50px;color:#232629;font-weight:normal">XYFitCurve</span><span class="t" style="left:97.0px;top:268.56px;font-size:8.50px;color:#232629;font-weight:normal">residuals</span><span class="t" style="left:145px;top:268.56px;font-size:8.50px;color:#232629;font-weight:normal">Column</span><span class="t" style="left:83.5px;top:281.24px;font-size:8.50px;color:#232629;font-weight:normal">legend</span><span class="t" style="left:145px;top:281.24px;font-size:8.50px;color:#232629;font-weight:normal">CartesianPlotL</span><span class="t" style="left:70.0px;top:293.91px;font-size:8.50px;color:#232629;font-weight:normal">plot with residuals</span><span class="t" style="left:145px;top:293.91px;font-size:8.50px;color:#232629;font-weight:normal">CartesianPlot</span><span class="t" style="left:56.5px;top:306.57px;font-size:8.50px;color:#232629;font-weight:normal">Sigmoid_data</span><span class="t" style="left:145px;top:306.57px;font-size:8.50px;color:#232629;font-weight:normal">Spreadsheet</span><span class="t" style="left:56.5px;top:319.24px;font-size:8.50px;color:#232629;font-weight:normal">Sigmoid_plot</span><span class="t" style="left:145px;top:319.24px;font-size:8.50px;color:#232629;font-weight:normal">Worksheet</span><span class="t" style="left:56.5px;top:331.92px;font-size:8.50px;color:#232629;font-weight:normal">Gompertz_data</span><span class="t" style="left:145px;top:331.92px;font-size:8.50px;color:#232629;font-weight:normal">Spreadsheet</span><span class="t" style="left:56.5px;top:344.58px;font-size:8.50px;color:#232629;font-weight:normal">Gompert_plot</span><span class="t" style="left:145px;top:344.58px;font-size:8.50px;color:#232629;font-weight:normal">Worksheet</span><span class="t" style="left:56.5px;top:357.25px;font-size:8.50px;color:#232629;font-weight:normal">Weibull_data</span><span class="t" style="left:145px;top:357.25px;font-size:8.50px;color:#232629;font-weight:normal">Spreadsheet</span><span class="t" style="left:56.5px;top:369.92px;font-size:8.50px;color:#232629;font-weight:normal">Weibull_plot</span><span class="t" style="left:145px;top:369.92px;font-size:8.50px;color:#232629;font-weight:normal">Worksheet</span><span class="t" style="left:56.5px;top:382.60px;font-size:8.50px;color:#232629;font-weight:normal">Gumbel_data</span><span class="t" style="left:145px;top:382.60px;font-size:8.50px;color:#232629;font-weight:normal">Spreadsheet</span><span class="t" style="left:56.5px;top:395.26px;font-size:8.50px;color:#232629;font-weight:normal">Gumbel_plot</span><span class="t" style="left:145px;top:395.26px;font-size:8.50px;color:#232629;font-weight:normal">Worksheet</span></div><div class="a" style="left:16px;top:397px;width:180px;height:4.5px;background:#fcfcfc"></div><div class="a" style="left:15px;top:401.5px;width:183px;height:8px;background:#eff0f1;border-top:1px solid #d4d5d6"></div><svg style="left:0;top:0" width="200" height="410" viewBox="0 0 200 410"><rect x="195.8" y="88.5" width=".8" height="309" fill="#dadbdc"/><rect x="195.4" y="202.5" width="1.5" height="169" fill="#6a6e72"/><rect x="20" y="398.3" width="155" height="1.8" fill="#4d5155"/><rect x="175" y="398.3" width="18" height="1.8" fill="#cfd0d1"/></svg>
<svg style="left:0;top:0" width="752" height="423" viewBox="0 0 752 423"><rect x="273.3" y="51.7" width="240.5" height="300" fill="#5f656b"/><rect x="274" y="53" width="239" height="298" fill="#eff0f1"/><rect x="276.3" y="55.2" width="2.5" height="2.5" fill="#3daee9"/><rect x="276.3" y="58.1" width="2.5" height="2.5" fill="#6d6f72"/><rect x="276.3" y="61.0" width="2.5" height="2.5" fill="#6d6f72"/><rect x="279.2" y="55.2" width="2.5" height="2.5" fill="#6d6f72"/><rect x="279.2" y="58.1" width="2.5" height="2.5" fill="#6d6f72"/><rect x="279.2" y="61.0" width="2.5" height="2.5" fill="#6d6f72"/><rect x="282.1" y="55.2" width="2.5" height="2.5" fill="#6d6f72"/><rect x="282.1" y="58.1" width="2.5" height="2.5" fill="#6d6f72"/><rect x="282.1" y="61.0" width="2.5" height="2.5" fill="#6d6f72"/><path d="M478.5 58 L481.2 60.7 L483.9 58" fill="none" stroke="#777" stroke-width="0.8"/><path d="M491.5 60.7 L494.2 58 L496.9 60.7" fill="none" stroke="#777" stroke-width="0.8"/><circle cx="506.4" cy="59.3" r="5.4" fill="#7c7f83"/><path d="M504.2 57.1 L508.6 61.5 M508.6 57.1 L504.2 61.5" fill="none" stroke="#f4f4f4" stroke-width="0.9"/><rect x="276.6" y="66" width="228.4" height="285" fill="#fcfcfc"/><rect x="276.6" y="66" width="228.4" height="13" fill="#eff0f1"/><rect x="276.6" y="79" width="16.1" height="272" fill="#eff0f1"/><rect x="292.7" y="66" width="0.7" height="285" fill="#dcdddf"/><rect x="356.5" y="66" width="0.7" height="285" fill="#dcdddf"/><rect x="429.7" y="66" width="0.7" height="285" fill="#dcdddf"/><rect x="276.6" y="87.6" width="228.4" height="0.7" fill="#e4e5e6"/><rect x="276.6" y="96.6" width="228.4" height="0.7" fill="#e4e5e6"/><rect x="276.6" y="78.7" width="228.4" height="0.7" fill="#dcdddf"/><path d="M295.3 69.2 H303.3 M295.3 71.2 H301.3 M295.3 73.2 H303.3 M295.3 75.2 H301.3" fill="none" stroke="#555" stroke-width="0.9"/><rect x="302.3" y="74.7" width="1.5" height="1.5" fill="#444"/><path d="M359.8 69.2 H367.8 M359.8 71.2 H365.8 M359.8 73.2 H367.8 M359.8 75.2 H365.8" fill="none" stroke="#555" stroke-width="0.9"/><rect x="366.8" y="74.7" width="1.5" height="1.5" fill="#444"/><path d="M433 69.2 H441 M433 71.2 H439 M433 73.2 H441 M433 75.2 H439" fill="none" stroke="#555" stroke-width="0.9"/><rect x="440" y="74.7" width="1.5" height="1.5" fill="#444"/><rect x="505" y="66" width="8" height="285" fill="#eff0f1"/><rect x="507.9" y="70" width="1.3" height="270" fill="#d0d1d2"/><rect x="507.7" y="70" width="1.7" height="75" fill="#5d6166"/><path d="M507.5 67.5 L508.6 66.5 L509.7 67.5" fill="none" stroke="#888" stroke-width="0.5"/><rect x="512.8" y="51.7" width="1.2" height="300" fill="#7a7f86"/><path d="M507.5 339.5 L508.6 340.5 L509.7 339.5" fill="none" stroke="#888" stroke-width="0.5"/></svg><div class="ss"><span class="t" style="left:338px;top:55.95px;font-size:8.72px;color:#aeb0b3;font-weight:normal">Maxwell-Boltzmann_data</span><span class="t" style="left:306px;top:67.85px;font-size:8.50px;color:#232629;font-weight:normal">x {Numeric}</span><span class="t" style="left:370px;top:67.85px;font-size:8.50px;color:#232629;font-weight:normal">y_true {Numeric}</span><span class="t" style="left:443.3px;top:67.85px;font-size:8.50px;color:#232629;font-weight:normal">y_meas {Numeric}</span><span class="t" style="left:279px;top:78.85px;font-size:8.50px;color:#232629;font-weight:normal">1</span><span class="t" style="left:293.6px;top:78.85px;font-size:8.50px;color:#232629;font-weight:normal">0,000000e+00</span><span class="t" style="left:357.6px;top:78.85px;font-size:8.50px;color:#232629;font-weight:normal">0,000000e+00</span><span class="t" style="left:431.2px;top:78.85px;font-size:8.50px;color:#232629;font-weight:normal">-2,373721e-03</span><span class="t" style="left:279px;top:87.90px;font-size:8.50px;color:#232629;font-weight:normal">2</span><span class="t" style="left:293.6px;top:87.90px;font-size:8.50px;color:#232629;font-weight:normal">1,000000e+00</span><span class="t" style="left:357.6px;top:87.90px;font-size:8.50px;color:#232629;font-weight:normal">3,459171e-04</span><span class="t" style="left:431.2px;top:87.90px;font-size:8.50px;color:#232629;font-weight:normal">-3,011469e-03</span><span class="t" style="left:279px;top:96.95px;font-size:8.50px;color:#232629;font-weight:normal">3</span><span class="t" style="left:293.6px;top:96.95px;font-size:8.50px;color:#232629;font-weight:normal">2,000000e+00</span><span class="t" style="left:357.6px;top:96.95px;font-size:8.50px;color:#232629;font-weight:normal">1,371808e-03</span><span class="t" style="left:431.2px;top:96.95px;font-size:8.50px;color:#232629;font-weight:normal">-8,963710e-04</span></div>
<svg style="left:0;top:0" width="752" height="423" viewBox="0 0 752 423"><rect x="200" y="106" width="304" height="294" fill="#5b6269"/><rect x="201" y="118" width="303" height="281" fill="#f4f5f6"/><rect x="201" y="106" width="303" height="12" fill="#4a535b"/><rect x="200" y="117.6" width="304" height="1" fill="#6c9cc0"/><rect x="204" y="119" width="297" height="277" fill="#c3c3c3"/><rect x="486" y="130" width="5" height="266" fill="#7a7b7c"/><rect x="225" y="391" width="266" height="5" fill="#7a7b7c"/><rect x="220" y="124" width="266" height="267" fill="#ffffff"/><path d="M469.3 111 L472 113.7 L474.7 111" fill="none" stroke="#eef0f2" stroke-width="0.8" /><path d="M482 113.7 L484.7 111 L487.4 113.7" fill="none" stroke="#eef0f2" stroke-width="0.8" /><circle cx="497.5" cy="112.3" r="5.5" fill="#fbfbfb"/><path d="M495.3 110.1 L499.7 114.5 M499.7 110.1 L495.3 114.5" fill="none" stroke="#3a4148" stroke-width="0.9" /><path d="M204.5 109.5 V116 H205.5 M205 109 H212.5 V112 M206.8 111 V115.8 H212 M207 113.5 L209 111.8 L212 111" fill="none" stroke="#6a6460" stroke-width=".7"/><rect x="229.4" y="133.3" width="247.8" height="154.7" fill="none"/><path d="M229.4 133.3 H477.2 V288 H229.4 Z" fill="none" stroke="#000" stroke-width="0.9" /><path d="M280.00 152.8 V270.1" fill="none" stroke="#888" stroke-width="0.5" stroke-dasharray="1 1"/><path d="M328.80 152.8 V270.1" fill="none" stroke="#888" stroke-width="0.5" stroke-dasharray="1 1"/><path d="M377.60 152.8 V270.1" fill="none" stroke="#888" stroke-width="0.5" stroke-dasharray="1 1"/><path d="M426.40 152.8 V270.1" fill="none" stroke="#888" stroke-width="0.5" stroke-dasharray="1 1"/><path d="M304.40 152.8 V270.1" fill="none" stroke="#777" stroke-width="0.8" /><path d="M353.20 152.8 V270.1" fill="none" stroke="#777" stroke-width="0.8" /><path d="M402.00 152.8 V270.1" fill="none" stroke="#777" stroke-width="0.8" /><path d="M255.6 167.35 H451" fill="none" stroke="#555" stroke-width="0.5" stroke-dasharray="1 1.2"/><path d="M255.6 196.65 H451" fill="none" stroke="#555" stroke-width="0.5" stroke-dasharray="1 1.2"/><path d="M255.6 225.95 H451" fill="none" stroke="#555" stroke-width="0.5" stroke-dasharray="1 1.2"/><path d="M255.6 255.25 H451" fill="none" stroke="#555" stroke-width="0.5" stroke-dasharray="1 1.2"/><path d="M255.6 182.00 H451" fill="none" stroke="#c8c8c8" stroke-width="1.6" /><path d="M255.6 211.30 H451" fill="none" stroke="#c8c8c8" stroke-width="1.6" /><path d="M255.6 240.60 H451" fill="none" stroke="#c8c8c8" stroke-width="1.6" /><path d="M255.6 152.8 V270.1 H451" fill="none" stroke="#000" stroke-width="1" /><path d="M255.6 152.8 H451 V270.1" fill="none" stroke="#111" stroke-width="0.8" /><path d="M255.60 270.1 V267.1" fill="none" stroke="#000" stroke-width="0.8" /><path d="M304.40 270.1 V267.1" fill="none" stroke="#000" stroke-width="0.8" /><path d="M353.20 270.1 V267.1" fill="none" stroke="#000" stroke-width="0.8" /><path d="M402.00 270.1 V267.1" fill="none" stroke="#000" stroke-width="0.8" /><path d="M450.80 270.1 V267.1" fill="none" stroke="#000" stroke-width="0.8" /><path d="M280.00 270.1 V268.6" fill="none" stroke="#000" stroke-width="0.6" /><path d="M328.80 270.1 V268.6" fill="none" stroke="#000" stroke-width="0.6" /><path d="M377.60 270.1 V268.6" fill="none" stroke="#000" stroke-width="0.6" /><path d="M426.40 270.1 V268.6" fill="none" stroke="#000" stroke-width="0.6" /><path d="M255.6 152.70 H258.6" fill="none" stroke="#000" stroke-width="0.8" /><path d="M255.6 182.00 H258.6" fill="none" stroke="#000" stroke-width="0.8" /><path d="M255.6 211.30 H258.6" fill="none" stroke="#000" stroke-width="0.8" /><path d="M255.6 240.60 H258.6" fill="none" stroke="#000" stroke-width="0.8" /><path d="M255.6 269.90 H258.6" fill="none" stroke="#000" stroke-width="0.8" /><path d="M255.60 152.8 V155.3" fill="none" stroke="#000" stroke-width="0.8" /><path d="M275.14 152.8 V155.3" fill="none" stroke="#000" stroke-width="0.8" /><path d="M294.68 152.8 V155.3" fill="none" stroke="#000" stroke-width="0.8" /><path d="M314.22 152.8 V155.3" fill="none" stroke="#000" stroke-width="0.8" /><path d="M333.76 152.8 V155.3" fill="none" stroke="#000" stroke-width="0.8" /><path d="M353.30 152.8 V155.3" fill="none" stroke="#000" stroke-width="0.8" /><path d="M372.84 152.8 V155.3" fill="none" stroke="#000" stroke-width="0.8" /><path d="M392.38 152.8 V155.3" fill="none" stroke="#000" stroke-width="0.8" /><path d="M411.92 152.8 V155.3" fill="none" stroke="#000" stroke-width="0.8" /><path d="M431.46 152.8 V155.3" fill="none" stroke="#000" stroke-width="0.8" /><path d="M451.00 152.8 V155.3" fill="none" stroke="#000" stroke-width="0.8" /><path d="M451 164.40 H448.5" fill="none" stroke="#000" stroke-width="0.7" /><path d="M451 176.10 H448.5" fill="none" stroke="#000" stroke-width="0.7" /><path d="M451 187.80 H448.5" fill="none" stroke="#000" stroke-width="0.7" /><path d="M451 199.50 H448.5" fill="none" stroke="#000" stroke-width="0.7" /><path d="M451 211.20 H448.5" fill="none" stroke="#000" stroke-width="0.7" /><path d="M451 222.90 H448.5" fill="none" stroke="#000" stroke-width="0.7" /><path d="M451 234.60 H448.5" fill="none" stroke="#000" stroke-width="0.7" /><path d="M451 246.30 H448.5" fill="none" stroke="#000" stroke-width="0.7" /><path d="M451 258.00 H448.5" fill="none" stroke="#000" stroke-width="0.7" /><path d="M451 269.70 H448.5" fill="none" stroke="#000" stroke-width="0.7" /><text x="252.2" y="155.7" font-size="6.0" text-anchor="end" fill="#000" font-family="Liberation Sans" >0.06</text><text x="252.2" y="185.0" font-size="6.0" text-anchor="end" fill="#000" font-family="Liberation Sans" >0.04</text><text x="252.2" y="214.29999999999998" font-size="6.0" text-anchor="end" fill="#000" font-family="Liberation Sans" >0.02</text><text x="252.2" y="243.6" font-size="6.0" text-anchor="end" fill="#000" font-family="Liberation Sans" >0.00</text><text x="252.2" y="272.9" font-size="6.0" text-anchor="end" fill="#000" font-family="Liberation Sans" >-0.02</text><text x="255.6" y="278.5" font-size="6.0" text-anchor="middle" fill="#000" font-family="Liberation Sans" >0.0</text><text x="304.4" y="278.5" font-size="6.0" text-anchor="middle" fill="#000" font-family="Liberation Sans" >10.0</text><text x="353.2" y="278.5" font-size="6.0" text-anchor="middle" fill="#000" font-family="Liberation Sans" >20.0</text><text x="402.0" y="278.5" font-size="6.0" text-anchor="middle" fill="#000" font-family="Liberation Sans" >30.0</text><text x="450.79999999999995" y="278.5" font-size="6.0" text-anchor="middle" fill="#000" font-family="Liberation Sans" >40.0</text><text x="351.3" y="287" font-size="6.0" text-anchor="middle" fill="#000" font-family="Liberation Sans" >x</text><text x="236.2" y="214.2" font-size="6.0" text-anchor="middle" fill="#000" font-family="Liberation Sans" transform="rotate(-90 234.5 214.2)">y</text><text x="357.9" y="140.4" font-size="6.95" text-anchor="middle" fill="#000" font-family="Liberation Sans" >fit to data</text><polyline points="255.60 240.60 256.09 240.59 256.58 240.58 257.06 240.55 257.55 240.52 258.04 240.47 258.53 240.42 259.02 240.35 259.50 240.27 259.99 240.19 260.48 240.09 260.97 239.98 261.46 239.86 261.94 239.74 262.43 239.60 262.92 239.45 263.41 239.30 263.90 239.13 264.38 238.95 264.87 238.77 265.36 238.57 265.85 238.37 266.34 238.15 266.82 237.93 267.31 237.69 267.80 237.45 268.29 237.20 268.78 236.94 269.26 236.67 269.75 236.39 270.24 236.10 270.73 235.80 271.22 235.50 271.70 235.18 272.19 234.86 272.68 234.53 273.17 234.19 273.66 233.85 274.14 233.49 274.63 233.13 275.12 232.76 275.61 232.38 276.10 232.00 276.58 231.60 277.07 231.20 277.56 230.80 278.05 230.38 278.54 229.96 279.02 229.54 279.51 229.10 280.00 228.66 280.49 228.22 280.98 227.76 281.46 227.31 281.95 226.84 282.44 226.37 282.93 225.90 283.42 225.42 283.90 224.93 284.39 224.44 284.88 223.95 285.37 223.45 285.86 222.94 286.34 222.43 286.83 221.92 287.32 221.41 287.81 220.88 288.30 220.36 288.78 219.83 289.27 219.30 289.76 218.77 290.25 218.23 290.74 217.69 291.22 217.15 291.71 216.60 292.20 216.06 292.69 215.51 293.18 214.96 293.66 214.40 294.15 213.85 294.64 213.29 295.13 212.74 295.62 212.18 296.10 211.62 296.59 211.06 297.08 210.50 297.57 209.94 298.06 209.38 298.54 208.82 299.03 208.26 299.52 207.70 300.01 207.14 300.50 206.58 300.98 206.02 301.47 205.46 301.96 204.91 302.45 204.35 302.94 203.80 303.42 203.25 303.91 202.70 304.40 202.15 304.89 201.60 305.38 201.06 305.86 200.52 306.35 199.98 306.84 199.44 307.33 198.91 307.82 198.38 308.30 197.86 308.79 197.33 309.28 196.81 309.77 196.30 310.26 195.78 310.74 195.28 311.23 194.77 311.72 194.27 312.21 193.78 312.70 193.29 313.18 192.80 313.67 192.32 314.16 191.84 314.65 191.37 315.14 190.90 315.62 190.44 316.11 189.98 316.60 189.53 317.09 189.09 317.58 188.65 318.06 188.21 318.55 187.78 319.04 187.36 319.53 186.94 320.02 186.53 320.50 186.13 320.99 185.73 321.48 185.34 321.97 184.96 322.46 184.58 322.94 184.21 323.43 183.85 323.92 183.49 324.41 183.14 324.90 182.79 325.38 182.46 325.87 182.13 326.36 181.81 326.85 181.49 327.34 181.18 327.82 180.88 328.31 180.59 328.80 180.31 329.29 180.03 329.78 179.76 330.26 179.50 330.75 179.24 331.24 178.99 331.73 178.75 332.22 178.52 332.70 178.30 333.19 178.08 333.68 177.87 334.17 177.67 334.66 177.48 335.14 177.30 335.63 177.12 336.12 176.95 336.61 176.79 337.10 176.64 337.58 176.49 338.07 176.36 338.56 176.23 339.05 176.11 339.54 175.99 340.02 175.89 340.51 175.79 341.00 175.70 341.49 175.62 341.98 175.55 342.46 175.48 342.95 175.42 343.44 175.37 343.93 175.33 344.42 175.29 344.90 175.27 345.39 175.25 345.88 175.24 346.37 175.23 346.86 175.23 347.34 175.24 347.83 175.26 348.32 175.29 348.81 175.32 349.30 175.36 349.78 175.41 350.27 175.47 350.76 175.53 351.25 175.60 351.74 175.67 352.22 175.76 352.71 175.85 353.20 175.94 353.69 176.05 354.18 176.16 354.66 176.28 355.15 176.40 355.64 176.53 356.13 176.67 356.62 176.81 357.10 176.96 357.59 177.12 358.08 177.28 358.57 177.45 359.06 177.62 359.54 177.80 360.03 177.99 360.52 178.18 361.01 178.38 361.50 178.58 361.98 178.79 362.47 179.00 362.96 179.22 363.45 179.45 363.94 179.68 364.42 179.91 364.91 180.15 365.40 180.40 365.89 180.65 366.38 180.90 366.86 181.16 367.35 181.42 367.84 181.69 368.33 181.96 368.82 182.24 369.30 182.52 369.79 182.81 370.28 183.10 370.77 183.39 371.26 183.69 371.74 183.99 372.23 184.29 372.72 184.60 373.21 184.91 373.70 185.23 374.18 185.55 374.67 185.87 375.16 186.19 375.65 186.52 376.14 186.85 376.62 187.18 377.11 187.52 377.60 187.86 378.09 188.20 378.58 188.54 379.06 188.89 379.55 189.24 380.04 189.59 380.53 189.94 381.02 190.29 381.50 190.65 381.99 191.01 382.48 191.37 382.97 191.73 383.46 192.09 383.94 192.46 384.43 192.82 384.92 193.19 385.41 193.56 385.90 193.93 386.38 194.30 386.87 194.67 387.36 195.04 387.85 195.42 388.34 195.79 388.82 196.17 389.31 196.54 389.80 196.92 390.29 197.29 390.78 197.67 391.26 198.05 391.75 198.43 392.24 198.80 392.73 199.18 393.22 199.56 393.70 199.94 394.19 200.31 394.68 200.69 395.17 201.07 395.66 201.44 396.14 201.82 396.63 202.20 397.12 202.57 397.61 202.95 398.10 203.32 398.58 203.69 399.07 204.07 399.56 204.44 400.05 204.81 400.54 205.18 401.02 205.55 401.51 205.91 402.00 206.28 402.49 206.65 402.98 207.01 403.46 207.37 403.95 207.73 404.44 208.10 404.93 208.45 405.42 208.81 405.90 209.17 406.39 209.52 406.88 209.87 407.37 210.23 407.86 210.58 408.34 210.92 408.83 211.27 409.32 211.61 409.81 211.96 410.30 212.30 410.78 212.64 411.27 212.97 411.76 213.31 412.25 213.64 412.74 213.97 413.22 214.30 413.71 214.63 414.20 214.95 414.69 215.27 415.18 215.60 415.66 215.91 416.15 216.23 416.64 216.54 417.13 216.86 417.62 217.17 418.10 217.47 418.59 217.78 419.08 218.08 419.57 218.38 420.06 218.68 420.54 218.97 421.03 219.27 421.52 219.56 422.01 219.85 422.50 220.13 422.98 220.42 423.47 220.70 423.96 220.97 424.45 221.25 424.94 221.52 425.42 221.80 425.91 222.06 426.40 222.33 426.89 222.59 427.38 222.86 427.86 223.11 428.35 223.37 428.84 223.62 429.33 223.88 429.82 224.12 430.30 224.37 430.79 224.61 431.28 224.86 431.77 225.09 432.26 225.33 432.74 225.56 433.23 225.80 433.72 226.02 434.21 226.25 434.70 226.47 435.18 226.70 435.67 226.91 436.16 227.13 436.65 227.34 437.14 227.56 437.62 227.77 438.11 227.97 438.60 228.18 439.09 228.38 439.58 228.58 440.06 228.77 440.55 228.97 441.04 229.16 441.53 229.35 442.02 229.54 442.50 229.72 442.99 229.91 443.48 230.09 443.97 230.26 444.46 230.44 444.94 230.61 445.43 230.78 445.92 230.95 446.41 231.12 446.90 231.28 447.38 231.45 447.87 231.61 448.36 231.77 448.85 231.92 449.34 232.07 449.82 232.23 450.31 232.38 450.80 232.52" fill="none" stroke="#1a2456" stroke-width="1.1"/><circle cx="255.7" cy="243.3" r="1.75" fill="#e8141c"/><circle cx="260.4" cy="244.4" r="1.75" fill="#e8141c"/><circle cx="265.3" cy="241.4" r="1.75" fill="#e8141c"/><circle cx="270.4" cy="242.2" r="1.75" fill="#e8141c"/><circle cx="275.3" cy="230.3" r="1.75" fill="#e8141c"/><circle cx="280.2" cy="230.3" r="1.75" fill="#e8141c"/><circle cx="284.9" cy="226.3" r="1.75" fill="#e8141c"/><circle cx="289.8" cy="212.4" r="1.75" fill="#e8141c"/><circle cx="294.5" cy="225.4" r="1.75" fill="#e8141c"/><circle cx="299.4" cy="202.7" r="1.75" fill="#e8141c"/><circle cx="304.5" cy="201.2" r="1.75" fill="#e8141c"/><circle cx="309.4" cy="195.9" r="1.75" fill="#e8141c"/><circle cx="314.3" cy="196.9" r="1.75" fill="#e8141c"/><circle cx="318.9" cy="195.2" r="1.75" fill="#e8141c"/><circle cx="323.8" cy="179.7" r="1.75" fill="#e8141c"/><circle cx="328.9" cy="183.1" r="1.75" fill="#e8141c"/><circle cx="333.8" cy="174.4" r="1.75" fill="#e8141c"/><circle cx="338.5" cy="171.4" r="1.75" fill="#e8141c"/><circle cx="343.4" cy="176.5" r="1.75" fill="#e8141c"/><circle cx="348.3" cy="175" r="1.75" fill="#e8141c"/><circle cx="353.4" cy="168.4" r="1.75" fill="#e8141c"/><circle cx="358.3" cy="182.9" r="1.75" fill="#e8141c"/><circle cx="363" cy="185.9" r="1.75" fill="#e8141c"/><circle cx="367.7" cy="182.9" r="1.75" fill="#e8141c"/><circle cx="372.6" cy="187.8" r="1.75" fill="#e8141c"/><circle cx="377.4" cy="185.6" r="1.75" fill="#e8141c"/><circle cx="382.6" cy="189.5" r="1.75" fill="#e8141c"/><circle cx="387.2" cy="201.6" r="1.75" fill="#e8141c"/><circle cx="392.3" cy="204.4" r="1.75" fill="#e8141c"/><circle cx="397" cy="206.3" r="1.75" fill="#e8141c"/><circle cx="401.9" cy="214.4" r="1.75" fill="#e8141c"/><circle cx="406.8" cy="210.5" r="1.75" fill="#e8141c"/><circle cx="411.9" cy="211.2" r="1.75" fill="#e8141c"/><circle cx="416.6" cy="214.8" r="1.75" fill="#e8141c"/><circle cx="421.5" cy="218.2" r="1.75" fill="#e8141c"/><circle cx="426.2" cy="212" r="1.75" fill="#e8141c"/><circle cx="431" cy="221.6" r="1.75" fill="#e8141c"/><circle cx="436.2" cy="212" r="1.75" fill="#e8141c"/><circle cx="441.1" cy="236.5" r="1.75" fill="#e8141c"/><circle cx="445.7" cy="234.6" r="1.75" fill="#e8141c"/><circle cx="450.6" cy="238" r="1.75" fill="#e8141c"/><rect x="376" y="240.7" width="68.3" height="21.7" fill="#fff"/><path d="M376 240.7 H444.3 V262.4 H376 Z" fill="none" stroke="#000" stroke-width="0.8" /><circle cx="388.5" cy="247.6" r="1.75" fill="#e8141c"/><text x="399.6" y="251.2" font-size="6.3" text-anchor="start" fill="#000" font-family="Liberation Sans" >measured data</text><path d="M380 256.1 H397.4" fill="none" stroke="#6f6f6f" stroke-width="1.2" /><text x="399.6" y="259.2" font-size="6.2" text-anchor="start" fill="#000" font-family="Liberation Sans" >fit</text><path d="M228 300.4 H476.4 V384.4 H228 Z" fill="none" stroke="#000" stroke-width="0.9" /><path d="M276.30 321.5 V362.5" fill="none" stroke="#9a9a9a" stroke-width="0.5" stroke-dasharray="1 1"/><path d="M326.90 321.5 V362.5" fill="none" stroke="#9a9a9a" stroke-width="0.5" stroke-dasharray="1 1"/><path d="M377.50 321.5 V362.5" fill="none" stroke="#9a9a9a" stroke-width="0.5" stroke-dasharray="1 1"/><path d="M428.10 321.5 V362.5" fill="none" stroke="#9a9a9a" stroke-width="0.5" stroke-dasharray="1 1"/><path d="M301.60 321.5 V362.5" fill="none" stroke="#8c8c8c" stroke-width="0.6" /><path d="M352.20 321.5 V362.5" fill="none" stroke="#8c8c8c" stroke-width="0.6" /><path d="M402.80 321.5 V362.5" fill="none" stroke="#8c8c8c" stroke-width="0.6" /><path d="M251 332.25 H453.4" fill="none" stroke="#8a8a8a" stroke-width="0.5" stroke-dasharray="1 1"/><path d="M251 352.75 H453.4" fill="none" stroke="#8a8a8a" stroke-width="0.5" stroke-dasharray="1 1"/><path d="M251 321.5 V362.5 H453.4 V321.5 H251" fill="none" stroke="#000" stroke-width="0.9" /><path d="M251 342.5 H453.4" fill="none" stroke="#000" stroke-width="0.9" /><path d="M251.00 362.5 V360.0" fill="none" stroke="#000" stroke-width="0.8" /><path d="M301.60 362.5 V360.0" fill="none" stroke="#000" stroke-width="0.8" /><path d="M352.20 362.5 V360.0" fill="none" stroke="#000" stroke-width="0.8" /><path d="M402.80 362.5 V360.0" fill="none" stroke="#000" stroke-width="0.8" /><path d="M453.40 362.5 V360.0" fill="none" stroke="#000" stroke-width="0.8" /><path d="M271.24 321.5 V323.7" fill="none" stroke="#000" stroke-width="0.7" /><path d="M291.48 321.5 V323.7" fill="none" stroke="#000" stroke-width="0.7" /><path d="M311.72 321.5 V323.7" fill="none" stroke="#000" stroke-width="0.7" /><path d="M331.96 321.5 V323.7" fill="none" stroke="#000" stroke-width="0.7" /><path d="M352.20 321.5 V323.7" fill="none" stroke="#000" stroke-width="0.7" /><path d="M372.44 321.5 V323.7" fill="none" stroke="#000" stroke-width="0.7" /><path d="M392.68 321.5 V323.7" fill="none" stroke="#000" stroke-width="0.7" /><path d="M412.92 321.5 V323.7" fill="none" stroke="#000" stroke-width="0.7" /><path d="M433.16 321.5 V323.7" fill="none" stroke="#000" stroke-width="0.7" /><path d="M453.4 324.80 H451.4" fill="none" stroke="#000" stroke-width="0.6" /><path d="M453.4 332.10 H451.4" fill="none" stroke="#000" stroke-width="0.6" /><path d="M453.4 339.40 H451.4" fill="none" stroke="#000" stroke-width="0.6" /><path d="M453.4 346.70 H451.4" fill="none" stroke="#000" stroke-width="0.6" /><path d="M453.4 354.00 H451.4" fill="none" stroke="#000" stroke-width="0.6" /><path d="M453.4 361.30 H451.4" fill="none" stroke="#000" stroke-width="0.6" /><path d="M276.30 362.5 V361.2" fill="none" stroke="#000" stroke-width="0.6" /><path d="M326.90 362.5 V361.2" fill="none" stroke="#000" stroke-width="0.6" /><path d="M377.50 362.5 V361.2" fill="none" stroke="#000" stroke-width="0.6" /><path d="M428.10 362.5 V361.2" fill="none" stroke="#000" stroke-width="0.6" /><path d="M251 322.00 H253.5" fill="none" stroke="#000" stroke-width="0.8" /><path d="M251 342.50 H253.5" fill="none" stroke="#000" stroke-width="0.8" /><path d="M251 363.00 H253.5" fill="none" stroke="#000" stroke-width="0.8" /><text x="248" y="325.4" font-size="6.0" text-anchor="end" fill="#000" font-family="Liberation Sans" >0.01</text><text x="248" y="345.9" font-size="6.0" text-anchor="end" fill="#000" font-family="Liberation Sans" >0.00</text><text x="248" y="366.4" font-size="6.0" text-anchor="end" fill="#000" font-family="Liberation Sans" >-0.01</text><text x="251.0" y="372.3" font-size="6.0" text-anchor="middle" fill="#000" font-family="Liberation Sans" >0.0</text><text x="301.6" y="372.3" font-size="6.0" text-anchor="middle" fill="#000" font-family="Liberation Sans" >10.0</text><text x="352.2" y="372.3" font-size="6.0" text-anchor="middle" fill="#000" font-family="Liberation Sans" >20.0</text><text x="402.79999999999995" y="372.3" font-size="6.0" text-anchor="middle" fill="#000" font-family="Liberation Sans" >30.0</text><text x="453.4" y="372.3" font-size="6.0" text-anchor="middle" fill="#000" font-family="Liberation Sans" >40.0</text><text x="350.4" y="380.8" font-size="6.0" text-anchor="middle" fill="#000" font-family="Liberation Sans" >x</text><text x="234.8" y="345" font-size="6.0" text-anchor="middle" fill="#000" font-family="Liberation Sans" transform="rotate(-90 233.1 345)">y</text><text x="344.5" y="307.0" font-size="6.8" text-anchor="middle" fill="#000" font-family="Liberation Sans" >residuals</text><path d="M251.00 342.5 V337.5" fill="none" stroke="#000" stroke-width="0.7" /><circle cx="251.00" cy="337.5" r="1.6" fill="#000"/><path d="M256.06 342.5 V335.5" fill="none" stroke="#000" stroke-width="0.7" /><circle cx="256.06" cy="335.5" r="1.6" fill="#000"/><path d="M261.12 342.5 V337.5" fill="none" stroke="#000" stroke-width="0.7" /><circle cx="261.12" cy="337.5" r="1.6" fill="#000"/><path d="M266.18 342.5 V332.7" fill="none" stroke="#000" stroke-width="0.7" /><circle cx="266.18" cy="332.7" r="1.6" fill="#000"/><path d="M271.24 342.5 V345.1" fill="none" stroke="#000" stroke-width="0.7" /><circle cx="271.24" cy="345.1" r="1.6" fill="#000"/><path d="M276.30 342.5 V339.5" fill="none" stroke="#000" stroke-width="0.7" /><circle cx="276.30" cy="339.5" r="1.6" fill="#000"/><path d="M281.36 342.5 V338.3" fill="none" stroke="#000" stroke-width="0.7" /><circle cx="281.36" cy="338.3" r="1.6" fill="#000"/><path d="M286.42 342.5 V350.8" fill="none" stroke="#000" stroke-width="0.7" /><circle cx="286.42" cy="350.8" r="1.6" fill="#000"/><path d="M291.48 342.5 V324.1" fill="none" stroke="#000" stroke-width="0.7" /><circle cx="291.48" cy="324.1" r="1.6" fill="#000"/><path d="M296.54 342.5 V349.1" fill="none" stroke="#000" stroke-width="0.7" /><circle cx="296.54" cy="349.1" r="1.6" fill="#000"/><path d="M301.60 342.5 V343.2" fill="none" stroke="#000" stroke-width="0.7" /><circle cx="301.60" cy="343.2" r="1.6" fill="#000"/><path d="M306.66 342.5 V343.2" fill="none" stroke="#000" stroke-width="0.7" /><circle cx="306.66" cy="343.2" r="1.6" fill="#000"/><path d="M311.72 342.5 V335.2" fill="none" stroke="#000" stroke-width="0.7" /><circle cx="311.72" cy="335.2" r="1.6" fill="#000"/><path d="M316.78 342.5 V330.4" fill="none" stroke="#000" stroke-width="0.7" /><circle cx="316.78" cy="330.4" r="1.6" fill="#000"/><path d="M321.84 342.5 V347.4" fill="none" stroke="#000" stroke-width="0.7" /><circle cx="321.84" cy="347.4" r="1.6" fill="#000"/><path d="M326.90 342.5 V338" fill="none" stroke="#000" stroke-width="0.7" /><circle cx="326.90" cy="338" r="1.6" fill="#000"/><path d="M331.96 342.5 V346.8" fill="none" stroke="#000" stroke-width="0.7" /><circle cx="331.96" cy="346.8" r="1.6" fill="#000"/><path d="M337.02 342.5 V349.1" fill="none" stroke="#000" stroke-width="0.7" /><circle cx="337.02" cy="349.1" r="1.6" fill="#000"/><path d="M342.08 342.5 V340.9" fill="none" stroke="#000" stroke-width="0.7" /><circle cx="342.08" cy="340.9" r="1.6" fill="#000"/><path d="M347.14 342.5 V342.3" fill="none" stroke="#000" stroke-width="0.7" /><circle cx="347.14" cy="342.3" r="1.6" fill="#000"/><path d="M352.20 342.5 V352.5" fill="none" stroke="#000" stroke-width="0.7" /><circle cx="352.20" cy="352.5" r="1.6" fill="#000"/><path d="M357.26 342.5 V333.8" fill="none" stroke="#000" stroke-width="0.7" /><circle cx="357.26" cy="333.8" r="1.6" fill="#000"/><path d="M362.32 342.5 V332.7" fill="none" stroke="#000" stroke-width="0.7" /><circle cx="362.32" cy="332.7" r="1.6" fill="#000"/><path d="M367.38 342.5 V340.4" fill="none" stroke="#000" stroke-width="0.7" /><circle cx="367.38" cy="340.4" r="1.6" fill="#000"/><path d="M372.44 342.5 V337.6" fill="none" stroke="#000" stroke-width="0.7" /><circle cx="372.44" cy="337.6" r="1.6" fill="#000"/><path d="M377.50 342.5 V344.7" fill="none" stroke="#000" stroke-width="0.7" /><circle cx="377.50" cy="344.7" r="1.6" fill="#000"/><path d="M382.56 342.5 V343.8" fill="none" stroke="#000" stroke-width="0.7" /><circle cx="382.56" cy="343.8" r="1.6" fill="#000"/><path d="M387.62 342.5 V332.4" fill="none" stroke="#000" stroke-width="0.7" /><circle cx="387.62" cy="332.4" r="1.6" fill="#000"/><path d="M392.68 342.5 V333.3" fill="none" stroke="#000" stroke-width="0.7" /><circle cx="392.68" cy="333.3" r="1.6" fill="#000"/><path d="M397.74 342.5 V336.1" fill="none" stroke="#000" stroke-width="0.7" /><circle cx="397.74" cy="336.1" r="1.6" fill="#000"/><path d="M402.80 342.5 V329.9" fill="none" stroke="#000" stroke-width="0.7" /><circle cx="402.80" cy="329.9" r="1.6" fill="#000"/><path d="M407.86 342.5 V341" fill="none" stroke="#000" stroke-width="0.7" /><circle cx="407.86" cy="341" r="1.6" fill="#000"/><path d="M412.92 342.5 V343.8" fill="none" stroke="#000" stroke-width="0.7" /><circle cx="412.92" cy="343.8" r="1.6" fill="#000"/><path d="M417.98 342.5 V343.8" fill="none" stroke="#000" stroke-width="0.7" /><circle cx="417.98" cy="343.8" r="1.6" fill="#000"/><path d="M423.04 342.5 V343" fill="none" stroke="#000" stroke-width="0.7" /><circle cx="423.04" cy="343" r="1.6" fill="#000"/><path d="M428.10 342.5 V356.6" fill="none" stroke="#000" stroke-width="0.7" /><circle cx="428.10" cy="356.6" r="1.6" fill="#000"/><path d="M433.16 342.5 V345.8" fill="none" stroke="#000" stroke-width="0.7" /><circle cx="433.16" cy="345.8" r="1.6" fill="#000"/><path d="M438.22 342.5 V363.1" fill="none" stroke="#000" stroke-width="0.7" /><circle cx="438.22" cy="363.1" r="1.6" fill="#000"/><path d="M443.28 342.5 V331" fill="none" stroke="#000" stroke-width="0.7" /><circle cx="443.28" cy="331" r="1.6" fill="#000"/><path d="M448.34 342.5 V336.4" fill="none" stroke="#000" stroke-width="0.7" /><circle cx="448.34" cy="336.4" r="1.6" fill="#000"/><path d="M453.40 342.5 V333.9" fill="none" stroke="#000" stroke-width="0.7" /><circle cx="453.40" cy="333.9" r="1.6" fill="#000"/></svg><div class="pw"><span class="t" style="left:298.3px;top:108.50px;font-size:8.72px;color:#f0f2f4">Maxwell-Boltzmann_plot</span></div>
<svg style="left:0;top:0" width="752" height="423" viewBox="0 0 752 423"><rect x="524" y="51" width="228" height="352" fill="#eff0f1"/><rect x="524" y="51" width="2.6" height="352" fill="#f6f6f7"/><rect x="524" y="51" width="0.6" height="352" fill="#d8d9da"/><rect x="524.5" y="402" width="227.5" height="0.8" fill="#d6d7d8"/><path d="M731.4 55.5 L733.9 58 L731.4 60.5 L728.9 58Z" fill="none" stroke="#555" stroke-width="0.7"/><circle cx="744.4" cy="58" r="5.4" fill="#7d8084"/><path d="M742.1 55.7 L746.7 60.3 M746.7 55.7 L742.1 60.3" fill="none" stroke="#f2f2f2" stroke-width="0.9"/><rect x="526.75" y="78.94999999999999" width="222.3" height="307.1" rx="1" fill="#eff0f1" stroke="#d3d4d5" stroke-width=".7"/><rect x="557.5" y="68.3" width="98.3" height="10.6" fill="#d9dadc"/><rect x="577.6" y="68.5" width="0.7" height="10.4" fill="#c4c5c6"/><rect x="606.4" y="68.5" width="0.7" height="10.4" fill="#c4c5c6"/><rect x="633" y="68.5" width="0.7" height="10.4" fill="#c4c5c6"/><rect x="527.35" y="68.14999999999999" width="30.1" height="10.8" rx="1" fill="#eff0f1" stroke="#d0d1d2" stroke-width=".7"/><rect x="527.5" y="78.2" width="30" height="1.5" fill="#eff0f1"/><rect x="571.75" y="81.05" width="175.3" height="11.8" rx="1.5" fill="#fcfcfc" stroke="#d8d9da" stroke-width=".7"/><rect x="571.75" y="94.94999999999999" width="175.3" height="11.3" rx="1.5" fill="#fcfcfc" stroke="#d8d9da" stroke-width=".7"/><defs></defs><rect x="571.5500000000001" y="120.94999999999999" width="175.70000000000002" height="11.700000000000006" rx="1.5" fill="#e9eaeb" stroke="#cfd0d1" stroke-width=".7"/><rect x="572" y="121.39999999999999" width="175" height="5.400000000000003" fill="#f1f2f3"/><path d="M743.8 126.3 L745 127.5 L746.2 126.3" fill="none" stroke="#888" stroke-width="0.6"/><defs></defs><rect x="571.5500000000001" y="134.54999999999998" width="175.70000000000002" height="11.900000000000023" rx="1.5" fill="#e9eaeb" stroke="#cfd0d1" stroke-width=".7"/><rect x="572" y="135.0" width="175" height="5.5000000000000115" fill="#f1f2f3"/><path d="M743.8 140.0 L745 141.2 L746.2 140.0" fill="none" stroke="#888" stroke-width="0.6"/><defs></defs><rect x="571.5500000000001" y="148.04999999999998" width="175.70000000000002" height="11.600000000000012" rx="1.5" fill="#e9eaeb" stroke="#cfd0d1" stroke-width=".7"/><rect x="572" y="148.5" width="175" height="5.350000000000006" fill="#f1f2f3"/><path d="M743.8 153.35 L745 154.54999999999998 L746.2 153.35" fill="none" stroke="#888" stroke-width="0.6"/><circle cx="573.6" cy="166.6" r="2.2" fill="#d9ecf7"/><circle cx="573.6" cy="166.6" r="1.5" fill="#3daee9"/><rect x="585.15" y="173.15" width="161.9" height="12.0" rx="1.5" fill="#e9eaeb" stroke="#dcdddf" stroke-width=".7"/><rect x="585.15" y="186.95" width="161.9" height="12.0" rx="1.5" fill="#e9eaeb" stroke="#dcdddf" stroke-width=".7"/><path d="M744 177.8 L745 176.8 L746 177.8 M744 179.8 L745 180.8 L746 179.8" fill="none" stroke="#b0b0b0" stroke-width="0.5"/><path d="M744 191.7 L745 190.7 L746 191.7 M744 193.7 L745 194.7 L746 193.7" fill="none" stroke="#b0b0b0" stroke-width="0.5"/><defs></defs><rect x="571.5500000000001" y="213.95" width="175.70000000000002" height="11.500000000000018" rx="1.5" fill="#e9eaeb" stroke="#cfd0d1" stroke-width=".7"/><rect x="572" y="214.4" width="175" height="5.300000000000009" fill="#f1f2f3"/><path d="M743.8 219.2 L745 220.39999999999998 L746.2 219.2" fill="none" stroke="#888" stroke-width="0.6"/><rect x="571.5500000000001" y="225.85" width="175.70000000000002" height="26.3" rx="1" fill="#fcfcfc" stroke="#d8d9da" stroke-width=".7"/><rect x="672.75" y="255.04999999999998" width="42.699999999999996" height="12.100000000000001" rx="1.5" fill="#eceded" stroke="#cfd0d1" stroke-width=".7"/><rect x="717.75" y="255.04999999999998" width="29.6" height="12.100000000000001" rx="1.5" fill="#eceded" stroke="#cfd0d1" stroke-width=".7"/><rect x="571.35" y="271.65000000000003" width="175.9" height="80.89999999999999" rx="1" fill="#fcfcfc" stroke="#8ccbea" stroke-width=".7"/><rect x="527" y="352.3" width="221.5" height="0.8" fill="#d6d7d8"/><rect x="744.2" y="276" width="2.2" height="72" fill="#b9babc"/><rect x="744.2" y="295.4" width="2.2" height="32" fill="#3daee9"/><path d="M744.3 274.5 L745.3 273.5 L746.3 274.5 M744.3 349 L745.3 350 L746.3 349" fill="none" stroke="#999" stroke-width="0.5"/><rect x="692.85" y="354.15000000000003" width="54.3" height="14.9" rx="1.5" fill="#e2e3e5" stroke="#dadbdd" stroke-width=".7"/><circle cx="700.3" cy="361.6" r="3.2" fill="none" stroke="#a8aaad" stroke-width=".8"/><path d="M699.3 359.9 L701.8 361.6 L699.3 363.3Z" fill="#a8aaad" stroke="#a8aaad" stroke-width="0.3"/><rect x="529.4" y="378.4" width="3.1" height="3.1" fill="#3daee9"/><rect x="712.5500000000001" y="388.95000000000005" width="10.100000000000001" height="9.9" rx="1" fill="#e6e7e8" stroke="#d6d7d8" stroke-width=".7"/><rect x="724.15" y="388.95000000000005" width="10.100000000000001" height="9.9" rx="1" fill="#e6e7e8" stroke="#d6d7d8" stroke-width=".7"/><rect x="735.35" y="388.95000000000005" width="10.100000000000001" height="9.9" rx="1" fill="#e6e7e8" stroke="#d6d7d8" stroke-width=".7"/><path d="M715 391.8 H717.5 L718 392.5 H720.5 V396.5 H715Z" fill="none" stroke="#777" stroke-width="0.6"/><path d="M726.6 391.6 H732 V397 H726.6Z M728 391.6 V393.5 H730.5 V391.6" fill="none" stroke="#444" stroke-width="0.6"/><path d="M737.8 391.8 H741.8 V397 H737.8Z M739 395.5 L742.5 392" fill="none" stroke="#555" stroke-width="0.6"/></svg><div class="fp"><span class="t " style="left:526.6px;top:54.65px;font-size:8.72px;color:#232629;font-weight:normal">Fit</span><span class="t " style="left:529.6px;top:70.35px;font-size:8.50px;color:#232629;font-weight:normal">General</span><span class="t " style="left:560.7px;top:70.35px;font-size:8.50px;color:#232629;font-weight:normal">Line</span><span class="t " style="left:578.7px;top:70.35px;font-size:8.50px;color:#232629;font-weight:normal">Symbol</span><span class="t " style="left:607.7px;top:70.35px;font-size:8.50px;color:#232629;font-weight:normal">Values</span><span class="t " style="left:634.3px;top:70.35px;font-size:8.50px;color:#232629;font-weight:normal">Filling</span><span class="t " style="left:528.8px;top:83.45px;font-size:8.50px;color:#232629;font-weight:normal">Name</span><span class="t " style="left:573.4px;top:83.45px;font-size:8.50px;color:#232629;font-weight:normal">fit</span><span class="t " style="left:528.8px;top:97.05px;font-size:8.50px;color:#232629;font-weight:normal">Comment</span><span class="t " style="left:528.8px;top:111.75px;font-size:8.50px;color:#232629;font-weight:bold">Data:</span><span class="t " style="left:528.8px;top:123.35px;font-size:8.50px;color:#232629;font-weight:normal">x-Data</span><span class="t " style="left:573.2px;top:123.35px;font-size:8.50px;color:#232629;font-weight:normal">x</span><span class="t " style="left:528.8px;top:136.95px;font-size:8.50px;color:#232629;font-weight:normal">y-Data</span><span class="t " style="left:573.2px;top:136.85px;font-size:8.50px;color:#232629;font-weight:normal">y_meas</span><span class="t " style="left:528.8px;top:150.35px;font-size:8.50px;color:#232629;font-weight:normal">Weights</span><span class="t " style="left:528.8px;top:163.05px;font-size:8.50px;color:#232629;font-weight:normal">x-Range</span><span class="t " style="left:576.5px;top:163.05px;font-size:8.50px;color:#232629;font-weight:normal">Auto</span><span class="t " style="left:571px;top:175.15px;font-size:8.50px;color:#a4a6a9;font-weight:normal">Min</span><span class="t " style="left:586.5px;top:175.15px;font-size:8.50px;color:#a4a6a9;font-weight:normal">0,000000</span><span class="t " style="left:571px;top:189.05px;font-size:8.50px;color:#a4a6a9;font-weight:normal">Max</span><span class="t " style="left:586.5px;top:189.05px;font-size:8.50px;color:#a4a6a9;font-weight:normal">99,000000</span><span class="t " style="left:528.8px;top:204.35px;font-size:8.50px;color:#232629;font-weight:bold">Fit:</span><span class="t " style="left:528.8px;top:215.95px;font-size:8.50px;color:#232629;font-weight:normal">Model</span><span class="t " style="left:573.2px;top:216.05px;font-size:8.50px;color:#232629;font-weight:normal">Maxwell-Boltzmann</span><span class="t " style="left:528.8px;top:235.65px;font-size:8.50px;color:#232629;font-weight:normal">f(x)</span><span class="t fx" style="left:572.8px;top:229.55px;font-size:8.72px;color:#232629;font-weight:normal"><b>sqrt</b>(2/<b>pi</b>)*<i>x</i>^2*<b>exp</b>(-<i>x</i>^2/(2*<i>a</i>^2))/<i>a</i>^3</span><span class="t " style="left:675px;top:257.55px;font-size:8.50px;color:#232629;font-weight:normal">Parameters</span><span class="t " style="left:719.6px;top:257.55px;font-size:8.50px;color:#232629;font-weight:normal">Options</span><span class="t " style="left:528.9px;top:273.35px;font-size:8.50px;color:#232629;font-weight:bold">Results:</span><span class="t " style="left:572.9px;top:274.55px;font-size:8.50px;color:#232629;font-weight:bold">Parameters:</span><span class="t " style="left:572.9px;top:284.75px;font-size:8.50px;color:#232629;font-weight:normal">a = 13.1565±2.0508</span><span class="t " style="left:572.9px;top:304.15px;font-size:8.50px;color:#232629;font-weight:bold">Goodness of fit:</span><span class="t " style="left:572.9px;top:314.35px;font-size:8.50px;color:#232629;font-weight:normal">sum of squared errors (χ²): 0.00214907</span><span class="t " style="left:572.9px;top:324.15px;font-size:8.50px;color:#232629;font-weight:normal">mean squared error: 2.14907e-05</span><span class="t " style="left:572.9px;top:333.95px;font-size:8.50px;color:#232629;font-weight:normal">root-mean squared error (reduced χ²): 0.0046358</span><span class="t " style="left:572.9px;top:343.85px;font-size:8.50px;color:#232629;font-weight:normal">mean absolute error: 0.363451</span><span class="t " style="left:705.5px;top:357.95px;font-size:8.50px;color:#a6a8ab;font-weight:normal">Recalculate</span><span class="t " style="left:534px;top:376.55px;font-size:8.50px;color:#232629;font-weight:normal">visible</span></div>
</div></body></html>
